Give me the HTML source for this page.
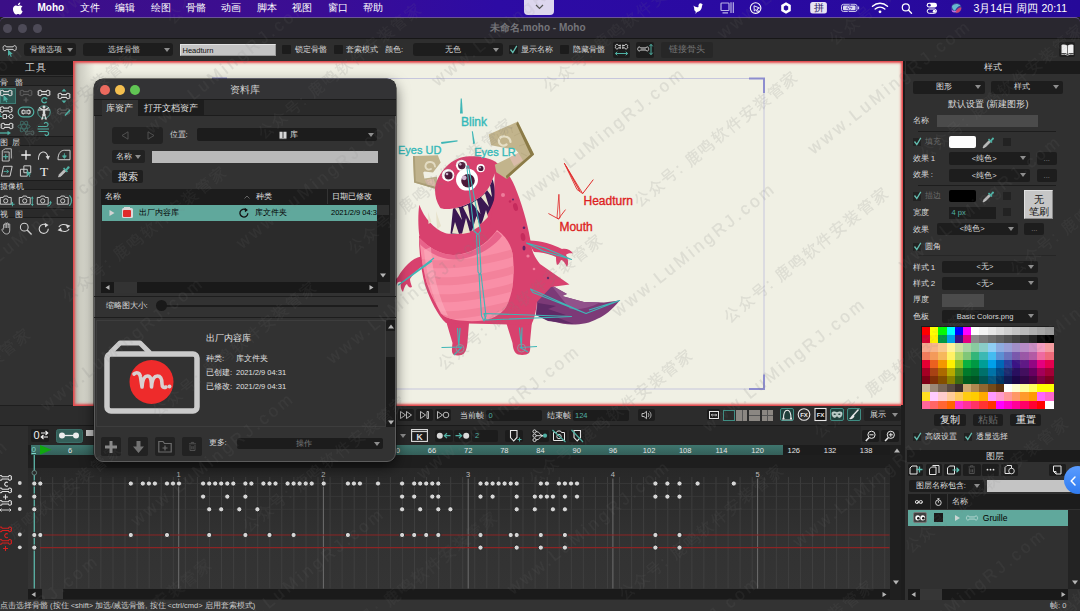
<!DOCTYPE html>
<html lang="zh">
<head>
<meta charset="utf-8">
<title>Moho</title>
<style>
*{box-sizing:border-box;margin:0;padding:0}
html,body{width:1080px;height:611px;overflow:hidden;background:#1e1e1e}
body{font-family:"Liberation Sans",sans-serif;font-size:8px;color:#d8d8d8;position:relative;line-height:1}
.a{position:absolute}
.t{position:absolute;white-space:nowrap;line-height:1}
svg{position:absolute;overflow:visible}
/* menubar */
#menubar{left:0;top:0;width:1080px;height:17px;background:linear-gradient(90deg,#3b0f87 0%,#3c0e90 22%,#3a0d95 30%,#2d0ba4 46%,#2a0aa2 65%,#260999 100%)}
#menubar .m{position:absolute;top:2.7px;font-size:10px;color:#fff;white-space:nowrap}
#titlebar{left:0;top:17px;width:1080px;height:21px;background:#29272f;border-top:1px solid #6b5596;border-radius:5px 5px 0 0}
#toolbar{left:0;top:38px;width:1080px;height:23px;background:#2e2e2e;border-top:1px solid #171717}
.dd{position:absolute;background:#1d1d1d;border-radius:3px;height:13.7px}
.dd .t{top:3px;font-size:7.5px;color:#d0d0d0}
.arr{position:absolute;width:0;height:0;border-left:3px solid transparent;border-right:3px solid transparent;border-top:4.5px solid #8e8e8e}
.cb{position:absolute;width:8.700px;height:8.700px;background:#222;margin:-.4px 0 0 -.4px}
/* panels */
.phead{position:absolute;background:#1b1b1b;color:#d6d6d6;font-size:9px;text-align:center}
.sech{left:0;width:73px;height:10px;background:#2a2a2a;border-bottom:1px solid #1c1c1c;border-top:1px solid #1c1c1c;font-size:8px;color:#d8d8d8}
.btn2{top:358px;width:20px;height:19px;background:#222;border-radius:2px}
.cb9{position:absolute;width:9px;height:9px;background:#1c1c1c;border-radius:1px}
</style>
</head>
<body>

<!-- ================= MENU BAR ================= -->
<div id="menubar" class="a">
  <svg style="left:12px;top:2px" width="11" height="13" viewBox="0 0 22 26"><path fill="#fff" d="M18.3 13.8c0-3 2.5-4.500 2.600-4.600-1.400-2.100-3.600-2.400-4.400-2.400-1.900-.2-3.700 1.100-4.600 1.100-1 0-2.400-1.100-4-1-2 0-3.900 1.200-5 3-2.100 3.700-.5 9.100 1.500 12.100 1 1.500 2.200 3.100 3.800 3 1.500-.1 2.100-1 3.900-1s2.300 1 3.900.9c1.600 0 2.700-1.500 3.700-2.900 1.100-1.700 1.600-3.300 1.600-3.400-.1 0-3-1.200-3-4.800zM15.300 4.900c.8-1 1.400-2.400 1.200-3.800-1.200.1-2.600.8-3.500 1.800-.8.900-1.400 2.300-1.300 3.700 1.400.1 2.800-.7 3.600-1.700z"/></svg>
  <span class="m" style="left:37.500px;font-weight:bold">Moho</span>
  <span class="m" style="left:79.500px">文件</span>
  <span class="m" style="left:115px">编辑</span>
  <span class="m" style="left:150.500px">绘图</span>
  <span class="m" style="left:186px">骨骼</span>
  <span class="m" style="left:221px">动画</span>
  <span class="m" style="left:256.500px">脚本</span>
  <span class="m" style="left:292px">视图</span>
  <span class="m" style="left:327.500px">窗口</span>
  <span class="m" style="left:363px">帮助</span>
  <div class="a" style="left:524px;top:0;width:30px;height:15px;background:#ddd6ee;border-radius:0 0 4px 4px"></div>
  <svg style="left:535px;top:4px" width="9" height="6" viewBox="0 0 9 6"><path d="M1 1 L4.500 4.500 L8 1" fill="none" stroke="#555" stroke-width="1.200"/></svg>
  <svg style="left:0;top:0" width="1080" height="17" viewBox="0 0 1080 17">
    <path d="M693.500 5.500 C695 7 697 7.500 698.500 7 C698 5 699 3.200 700.500 3.200 C701.300 3.200 701.800 3.600 702 4.300 L703 4.800 L702 5.500 C702 9 700 11.500 697 12 L695.500 14 L695.800 11.800 C694.500 11 694 9.500 694.200 8 C694 7.200 693.600 6.300 693.500 5.500 Z" fill="#fff"/>
    <g fill="none" stroke="#b9b2e6" stroke-width="1.200"><rect x="721" y="3" width="8" height="7.500" rx=".8"/><path d="M722.500 12.800 H728 M731 2.300 V13 M733.300 2.300 V13"/></g>
    <circle cx="755.600" cy="8.100" r="5.300" fill="none" stroke="#fff" stroke-width="1.100"/><path d="M754 5.800 L759.500 8 L757.200 8.900 L758.500 11.500 L757.300 12 L756.100 9.500 L754.300 11 Z" fill="none" stroke="#fff" stroke-width=".9"/>
    <path d="M786 2.200 L790.800 5 V11 L786 13.800 L781.200 11 V5 Z M786 5.200 L783.800 6.500 V9.500 L786 10.800 L788.200 9.500 V6.500 Z" fill="#fff" fill-rule="evenodd"/>
    <rect x="810.200" y="2" width="16.700" height="11.400" rx="2.500" fill="#e7e3f3"/>
    <g fill="none" stroke="#fff" stroke-width="1"><rect x="841.500" y="4.300" width="15.500" height="7.200" rx="2" stroke="#c9c3ea"/><path d="M858.500 6.500 V9.300" stroke="#c9c3ea" stroke-width="1.300"/></g>
    <rect x="843" y="5.600" width="12.500" height="4.600" rx="1" fill="#d9d5f0"/>
    <path d="M850.500 3.800 L846.500 8.300 H849 L848 12 L852 7.500 H849.500 Z" fill="#fff" stroke="#2a0aa2" stroke-width=".6"/>
    <g fill="none" stroke="#fff" stroke-width="1.500" stroke-linecap="round"><path d="M872.500 6.200 C877 2.400 883 2.400 887.500 6.200"/><path d="M875.200 9 C878 6.700 882 6.700 884.800 9"/></g><circle cx="880" cy="11.800" r="1.400" fill="#fff"/>
    <circle cx="905.800" cy="7.400" r="3.500" fill="none" stroke="#fff" stroke-width="1.200"/><path d="M908.400 10 L911.500 13.200" stroke="#fff" stroke-width="1.400" stroke-linecap="round"/>
    <rect x="926.700" y="2.800" width="10.300" height="4.800" rx="2.400" fill="#fff"/><circle cx="929.300" cy="5.200" r="1.400" fill="#2a0aa2"/>
    <rect x="927.200" y="9" width="9.300" height="4.300" rx="2.150" fill="none" stroke="#fff" stroke-width="1"/><circle cx="934.300" cy="11.150" r="1.500" fill="#fff"/>
    <circle cx="956.300" cy="8" r="5.200" fill="#3a3f9c"/><path d="M952 6 C954 3.500 958 3.300 960.500 5.500 C958 6.500 956 8 955 11 C953 10 952 8 952 6 Z" fill="#6fd0d8" opacity=".85"/><path d="M955.500 12.800 C956 9.500 958.500 7.500 961.300 7.500 C961.500 10.500 959 13 955.500 12.800 Z" fill="#e0406a" opacity=".9"/><path d="M951.500 9.500 C953 11 955 11.500 957 10.500 C956 12.500 953.500 13 952 11.500 Z" fill="#c070e0"/>
  </svg>
  <span class="m" style="left:813.500px;top:2.700px;color:#2b1a66">拼</span>
  <span class="m" style="left:973.500px;font-size:10.500px;top:2.500px">3月14日 周四</span>
  <span class="m" style="left:1041.500px;font-size:10.500px;top:2.500px">20:11</span>
</div>

<!-- ================= TITLE BAR ================= -->
<div id="titlebar" class="a">
  <div class="a" style="left:2.700px;top:5.600px;width:9px;height:9px;border-radius:5px;background:#4d4a57"></div>
  <div class="a" style="left:17.700px;top:5.600px;width:9px;height:9px;border-radius:5px;background:#4d4a57"></div>
  <div class="a" style="left:32.900px;top:5.600px;width:9px;height:9px;border-radius:5px;background:#4d4a57"></div>
  <span class="t" style="left:490px;top:5px;font-size:10px;font-weight:bold;color:#75757a">未命名.moho - Moho</span>
</div>

<!-- ================= TOOLBAR ================= -->
<div id="toolbar" class="a">
  <svg style="left:2px;top:3.500px" width="16" height="15" viewBox="0 0 16 15"><path transform="translate(.5 1.500) scale(.9)" d="M4.2 2.6 C3.9 1.2 2.2 .8 1.5 1.8 C.4 2.2 .4 3.600 1.2 4 C.4 4.400 .4 5.800 1.5 6.200 C2.2 7.200 3.900 6.800 4.200 5.400 L11.800 5.400 C12.100 6.800 13.800 7.200 14.500 6.200 C15.600 5.800 15.600 4.400 14.800 4 C15.600 3.600 15.600 2.200 14.500 1.800 C13.800 .8 12.100 1.200 11.800 2.600 Z" fill="none" stroke="#d6d6d6" stroke-width="1.100"/><path d="M6 6.500 L6 13 L7.700 11.500 L8.800 14 L9.800 13.500 L8.700 11.200 L10.800 11 Z" fill="#4fb0a3"/></svg>
  <div class="dd" style="left:23.800px;top:3.500px;width:52.500px"><span class="t" style="left:6px;top:3.200px">骨骼选项</span><i class="arr" style="left:43.500px;top:5px"></i></div>
  <div class="dd" style="left:83px;top:3.500px;width:90px"><span class="t" style="left:25.300px;top:3.200px">选择骨骼</span><i class="arr" style="left:80.500px;top:5px"></i></div>
  <div class="a" style="left:179.500px;top:5px;width:96px;height:12px;background:#c4c4c4;border:1px solid #e2e2e2;border-right-color:#9a9a9a;border-bottom-color:#9a9a9a"><span class="t" style="left:2px;top:1.700px;font-size:7.500px;color:#111">Headturn</span></div>
  <i class="cb9" style="left:282px;top:6px"></i><span class="t" style="left:294.500px;top:7px;font-size:7.500px">锁定骨骼</span>
  <i class="cb9" style="left:333.800px;top:6px"></i><span class="t" style="left:345.800px;top:7px;font-size:7.500px">套索模式</span>
  <span class="t" style="left:385px;top:7px;font-size:7.500px">颜色:</span>
  <div class="dd" style="left:412.500px;top:3.500px;width:90px"><span class="t" style="left:32.500px;top:3.200px">无色</span><i class="arr" style="left:80.500px;top:5px"></i></div>
  <i class="cb9" style="left:508.800px;top:6px"></i><svg style="left:509px;top:5.500px" width="9" height="9" viewBox="0 0 9 9"><path d="M1.500 4.500 L3.800 7.500 L7.800 .8" fill="none" stroke="#63bdb0" stroke-width="1.300"/></svg><span class="t" style="left:521.300px;top:7px;font-size:7.500px">显示名称</span>
  <i class="cb9" style="left:560px;top:6px"></i><span class="t" style="left:572.500px;top:7px;font-size:7.500px">隐藏骨骼</span>
  <div class="a" style="left:612.500px;top:2.500px;width:17px;height:16px;background:#1d1d1d;border-radius:2px"></div>
  <svg style="left:613.500px;top:4px" width="15" height="13" viewBox="0 0 15 13"><path transform="translate(.8 .3) scale(.84)" d="M4.2 2.6 C3.9 1.2 2.2 .8 1.5 1.8 C.4 2.2 .4 3.600 1.2 4 C.4 4.400 .4 5.800 1.5 6.200 C2.2 7.200 3.900 6.800 4.200 5.400 L11.800 5.400 C12.100 6.800 13.800 7.200 14.500 6.200 C15.600 5.800 15.600 4.400 14.800 4 C15.600 3.600 15.600 2.200 14.500 1.800 C13.800 .8 12.100 1.200 11.800 2.600 Z" fill="none" stroke="#e0e0e0" stroke-width="1.100"/><path d="M7.500 .5 V7" stroke="#1d1d1d" stroke-width="1.600"/><path d="M6.200 1.500 V6 M8.800 1.500 V6" stroke="#e0e0e0" stroke-width=".7"/><path d="M1.500 10.500 H13.500 M3.300 8.800 L1.300 10.500 L3.300 12.200 M11.700 8.800 L13.700 10.500 L11.700 12.200" fill="none" stroke="#4fb0a3" stroke-width="1"/></svg>
  <div class="a" style="left:636.300px;top:2.500px;width:17.500px;height:16px;background:#1d1d1d;border-radius:2px"></div>
  <svg style="left:637px;top:4px" width="16" height="13" viewBox="0 0 16 13"><path transform="translate(.3 3) scale(.74)" d="M4.2 2.6 C3.9 1.2 2.2 .8 1.5 1.8 C.4 2.2 .4 3.600 1.2 4 C.4 4.400 .4 5.800 1.5 6.200 C2.2 7.200 3.900 6.800 4.200 5.400 L11.800 5.400 C12.100 6.800 13.800 7.200 14.500 6.200 C15.600 5.800 15.600 4.400 14.800 4 C15.600 3.600 15.600 2.200 14.500 1.800 C13.800 .8 12.100 1.200 11.800 2.600 Z" fill="none" stroke="#e0e0e0" stroke-width="1.200"/><path d="M4 5.300 H8.500 M4 6.800 H8.500" stroke="#9a9a9a" stroke-width=".5"/><path d="M14 1.500 V11.500 M12.300 3.300 L14 1.300 L15.700 3.300 M12.300 9.700 L14 11.700 L15.700 9.700" fill="none" stroke="#4fb0a3" stroke-width="1"/></svg>
  <div class="a" style="left:660.500px;top:2.500px;width:52.500px;height:16px;background:#272727;border-radius:2px"><span class="t" style="left:8.300px;top:3.500px;font-size:8.800px;color:#737373">链接骨头</span></div>
  <div class="a" style="left:1058.800px;top:3.300px;width:16.200px;height:15px;background:#1f1f1f;border-radius:2px"></div>
  <svg style="left:1060.500px;top:5px" width="13" height="12" viewBox="0 0 13 12"><path d="M.5 1 C2.500 .2 4.500 .4 6.200 1.500 V10 C4.500 9 2.500 8.800 .5 9.500 Z M12.500 1 C10.500 .2 8.500 .4 6.800 1.500 V10 C8.500 9 10.500 8.800 12.500 9.500 Z" fill="#efefef"/><path d="M.5 10.500 C2.500 10 4.500 10.200 6.500 11.200 C8.500 10.200 10.500 10 12.500 10.500" fill="none" stroke="#efefef" stroke-width=".8"/></svg>
</div>

<!-- ================= LEFT TOOLS PANEL ================= -->
<div class="a" id="left" style="left:0;top:61px;width:73px;height:344px;background:#313131">
  <div class="phead" style="left:0;top:0;width:73px;height:14px"><span class="t" style="left:25px;top:2px;font-size:10px;letter-spacing:1px">工具</span></div>
  <div class="a sech" style="top:15px"><span class="t" style="left:0;top:1.500px">骨&nbsp;&nbsp;&nbsp;骼</span></div>
  <div class="a sech" style="top:75px"><span class="t" style="left:0;top:1.500px">图&nbsp;&nbsp;层</span></div>
  <div class="a sech" style="top:119px"><span class="t" style="left:0;top:1.500px">摄像机</span></div>
  <div class="a sech" style="top:147px"><span class="t" style="left:0;top:1.500px">视&nbsp;&nbsp;&nbsp;图</span></div>
  <div class="a" style="left:0;top:26.500px;width:16px;height:16px;background:#2c5752;border:1px solid #3f7c75"></div>
</div>
<div class="a" id="lefticons" style="left:0;top:0;width:73px;height:405px;overflow:hidden">
<svg style="left:-1.8px;top:87.8px" width="18" height="16" viewBox="0 0 18 16"><path transform="translate(1.5 1) scale(1)" d="M4.2 2.6 C3.9 1.2 2.2 .8 1.5 1.8 C.4 2.2 .4 3.6 1.2 4 C.4 4.4 .4 5.8 1.5 6.2 C2.2 7.2 3.9 6.8 4.2 5.4 L9.0 5.4 C9.3 6.8 11.0 7.2 11.7 6.2 C12.8 5.8 12.8 4.4 12.0 4 C12.8 3.6 12.8 2.2 11.7 1.8 C11.0 .8 9.3 1.2 9.0 2.6 Z" fill="none" stroke="#d6d6d6" stroke-width="1.10"/><path d="M5.500 7 L5.500 13.500 L7.200 12 L8.300 14.500 L9.300 14 L8.200 11.700 L10.300 11.500 Z" fill="#4fb0a3"/></svg>
<svg style="left:16.5px;top:87.8px" width="18" height="16" viewBox="0 0 18 16"><path transform="translate(2.4 1) scale(1)" d="M4.2 2.6 C3.9 1.2 2.2 .8 1.5 1.8 C.4 2.2 .4 3.6 1.2 4 C.4 4.4 .4 5.8 1.5 6.2 C2.2 7.2 3.9 6.8 4.2 5.4 L9.0 5.4 C9.3 6.8 11.0 7.2 11.7 6.2 C12.8 5.8 12.8 4.4 12.0 4 C12.8 3.6 12.8 2.2 11.7 1.8 C11.0 .8 9.3 1.2 9.0 2.6 Z" fill="none" stroke="#5a5a5a" stroke-width="1.10"/><path d="M9 9.500 V14.500 M6.500 12 H11.500" stroke="#5a5a5a" stroke-width="1.2"/></svg>
<svg style="left:35.1px;top:87.8px" width="18" height="16" viewBox="0 0 18 16"><path transform="translate(2.4 1) scale(1)" d="M4.2 2.6 C3.9 1.2 2.2 .8 1.5 1.8 C.4 2.2 .4 3.6 1.2 4 C.4 4.4 .4 5.8 1.5 6.2 C2.2 7.2 3.9 6.8 4.2 5.4 L9.0 5.4 C9.3 6.8 11.0 7.2 11.7 6.2 C12.8 5.8 12.8 4.4 12.0 4 C12.8 3.6 12.8 2.2 11.7 1.8 C11.0 .8 9.3 1.2 9.0 2.6 Z" fill="none" stroke="#d6d6d6" stroke-width="1.10"/><path d="M11.500 10.800 A2.600 2.600 0 1 0 11.600 13.600" fill="none" stroke="#4fb0a3" stroke-width="1.300"/><path d="M10 9.200 L12.800 10 L11.200 12 Z" fill="#4fb0a3"/></svg>
<svg style="left:54.5px;top:87.8px" width="18" height="16" viewBox="0 0 18 16"><path transform="translate(2.4 4) scale(1)" d="M4.2 2.6 C3.9 1.2 2.2 .8 1.5 1.8 C.4 2.2 .4 3.6 1.2 4 C.4 4.4 .4 5.8 1.5 6.2 C2.2 7.2 3.9 6.8 4.2 5.4 L9.0 5.4 C9.3 6.8 11.0 7.2 11.7 6.2 C12.8 5.8 12.8 4.4 12.0 4 C12.8 3.6 12.8 2.2 11.7 1.8 C11.0 .8 9.3 1.2 9.0 2.6 Z" fill="none" stroke="#d6d6d6" stroke-width="1.10"/><path d="M6.500 3.500 L9 .8 L11.500 3.500 Z M6.500 12.500 L9 15.200 L11.500 12.500 Z" fill="#4fb0a3"/></svg>
<svg style="left:-1.8px;top:103.7px" width="18" height="16" viewBox="0 0 18 16"><path transform="translate(1.5 1.5) scale(1)" d="M4.2 2.6 C3.9 1.2 2.2 .8 1.5 1.8 C.4 2.2 .4 3.6 1.2 4 C.4 4.4 .4 5.8 1.5 6.2 C2.2 7.2 3.9 6.8 4.2 5.4 L9.0 5.4 C9.3 6.8 11.0 7.2 11.7 6.2 C12.8 5.8 12.8 4.4 12.0 4 C12.8 3.6 12.8 2.2 11.7 1.8 C11.0 .8 9.3 1.2 9.0 2.6 Z" fill="none" stroke="#d6d6d6" stroke-width="1.10"/><path d="M2 9 V12.500 H4" fill="none" stroke="#4fb0a3" stroke-width="1"/><path d="M5 10.500 H8.500 V14.500 H5 Z M9.500 12.500 H11" fill="none" stroke="#d6d6d6" stroke-width="1"/><circle cx="13" cy="12.500" r="2" fill="none" stroke="#d6d6d6" stroke-width="1"/></svg>
<svg style="left:16.5px;top:103.7px" width="18" height="16" viewBox="0 0 18 16"><rect x="1.200" y="3.200" width="15.600" height="9.600" rx="4.800" fill="none" stroke="#4fb0a3" stroke-width="1.200"/><path transform="translate(4.4 5.2) scale(0.7)" d="M4.2 2.6 C3.9 1.2 2.2 .8 1.5 1.8 C.4 2.2 .4 3.6 1.2 4 C.4 4.4 .4 5.8 1.5 6.2 C2.2 7.2 3.9 6.8 4.2 5.4 L9.0 5.4 C9.3 6.8 11.0 7.2 11.7 6.2 C12.8 5.8 12.8 4.4 12.0 4 C12.8 3.6 12.8 2.2 11.7 1.8 C11.0 .8 9.3 1.2 9.0 2.6 Z" fill="none" stroke="#d6d6d6" stroke-width="1.57"/></svg>
<svg style="left:35.1px;top:103.7px" width="18" height="16" viewBox="0 0 18 16"><circle cx="9" cy="8" r="6.300" fill="none" stroke="#4fb0a3" stroke-width=".8"/><path d="M9 4.500 V10 M3 6 H15 M4 3.500 L9 6.500 L14 3.500 M9 10 L6.500 15.500 M9 10 L11.500 15.500 M8 10 L7.500 15.500 M10 10 L10.500 15.500" stroke="#d6d6d6" stroke-width="1.100" fill="none"/><circle cx="9" cy="3" r="1.500" fill="#d6d6d6"/><path d="M7.800 5.500 H10.200 V10.500 H7.800 Z" fill="#d6d6d6"/></svg>
<svg style="left:54.5px;top:103.7px" width="18" height="16" viewBox="0 0 18 16"><path transform="translate(2 3.5) scale(1)" d="M4.2 2.6 C3.9 1.2 2.2 .8 1.5 1.8 C.4 2.2 .4 3.6 1.2 4 C.4 4.4 .4 5.8 1.5 6.2 C2.2 7.2 3.9 6.8 4.2 5.4 L9.0 5.4 C9.3 6.8 11.0 7.2 11.7 6.2 C12.8 5.8 12.8 4.4 12.0 4 C12.8 3.6 12.8 2.2 11.7 1.8 C11.0 .8 9.3 1.2 9.0 2.6 Z" fill="none" stroke="#5a5a5a" stroke-width="1.10"/><path d="M10 11.500 L15 6" stroke="#4fb0a3" stroke-width="1.500"/></svg>
<svg style="left:-1.8px;top:120.0px" width="18" height="16" viewBox="0 0 18 16"><path transform="translate(2.4 2) scale(1)" d="M4.2 2.6 C3.9 1.2 2.2 .8 1.5 1.8 C.4 2.2 .4 3.6 1.2 4 C.4 4.4 .4 5.8 1.5 6.2 C2.2 7.2 3.9 6.8 4.2 5.4 L9.0 5.4 C9.3 6.8 11.0 7.2 11.7 6.2 C12.8 5.8 12.8 4.4 12.0 4 C12.8 3.6 12.8 2.2 11.7 1.8 C11.0 .8 9.3 1.2 9.0 2.6 Z" fill="none" stroke="#d6d6d6" stroke-width="1.10"/><path d="M0 13 H10.500" stroke="#4fb0a3" stroke-width="1.300"/><path d="M9.500 10.700 L13 13 L9.500 15.300 Z" fill="#4fb0a3"/></svg>
<svg style="left:16.5px;top:120.0px" width="18" height="16" viewBox="0 0 18 16"><g fill="none" stroke="#3f6f69" stroke-width=".9"><ellipse cx="7" cy="6.500" rx="6" ry="2.300"/><ellipse cx="7" cy="6.500" rx="6" ry="2.300" transform="rotate(60 7 6.500)"/><ellipse cx="7" cy="6.500" rx="6" ry="2.300" transform="rotate(-60 7 6.500)"/></g><path transform="translate(8 10) scale(0.7)" d="M4.2 2.6 C3.9 1.2 2.2 .8 1.5 1.8 C.4 2.2 .4 3.6 1.2 4 C.4 4.4 .4 5.8 1.5 6.2 C2.2 7.2 3.9 6.8 4.2 5.4 L9.0 5.4 C9.3 6.8 11.0 7.2 11.7 6.2 C12.8 5.8 12.8 4.4 12.0 4 C12.8 3.6 12.8 2.2 11.7 1.8 C11.0 .8 9.3 1.2 9.0 2.6 Z" fill="none" stroke="#4a5a58" stroke-width="1.57"/></svg>
<svg style="left:35.1px;top:120.0px" width="18" height="16" viewBox="0 0 18 16"><path d="M3 6.500 H11 A2 2 0 1 0 9.200 3.800 M2.500 9 H14 M3.500 11.500 H11.500 A2 2 0 1 1 9.800 14.300" fill="none" stroke="#4fb0a3" stroke-width="1.200"/></svg>
<svg style="left:-1.8px;top:147.4px" width="18" height="16" viewBox="0 0 18 16"><g transform="translate(1.26 1.12) scale(0.86)"><path d="M3.500 3 L7 .8 H14 V12 M3.500 3 V15 H11.500 V4.500 H5" fill="none" stroke="#d6d6d6" stroke-width="1"/><path d="M7.500 7 V13 M4.500 10 H10.500" stroke="#4fb0a3" stroke-width="1.400"/></g></svg>
<svg style="left:16.5px;top:147.4px" width="18" height="16" viewBox="0 0 18 16"><g transform="translate(1.26 1.12) scale(0.86)"><path d="M9 2.500 V13.500 M3.500 8 H14.500" stroke="#f2f2f2" stroke-width="1.500"/></g></svg>
<svg style="left:35.1px;top:147.4px" width="18" height="16" viewBox="0 0 18 16"><g transform="translate(1.26 1.12) scale(0.86)"><path d="M2.500 13.500 C2.500 3 12 1.500 13.500 10" fill="none" stroke="#d6d6d6" stroke-width="1.200"/><path d="M10.800 9.500 L16 9 L13.800 13.800 Z" fill="#d6d6d6"/></g></svg>
<svg style="left:54.5px;top:147.4px" width="18" height="16" viewBox="0 0 18 16"><g transform="translate(1.26 1.12) scale(0.86)"><path d="M2 13.500 C2 5 6 2.500 9.500 2.500 H16 V13.500 Z" fill="none" stroke="#d6d6d6" stroke-width="1.100"/><path d="M9.500 6 V10 M7.300 9 L9.500 12 L11.700 9 Z" stroke="#4fb0a3" fill="#4fb0a3" stroke-width="1"/></g></svg>
<svg style="left:-1.8px;top:163.0px" width="18" height="16" viewBox="0 0 18 16"><g transform="translate(1.26 1.12) scale(0.86)"><path d="M5 2.500 H15 L12.500 14 H2.500 Z" fill="none" stroke="#d6d6d6" stroke-width="1.100"/><path d="M5 8.500 H10.500 M8.500 6.500 L11 8.500 L8.500 10.500" fill="none" stroke="#4fb0a3" stroke-width="1"/></g></svg>
<svg style="left:16.5px;top:163.0px" width="18" height="16" viewBox="0 0 18 16"><g transform="translate(1.26 1.12) scale(0.86)"><path d="M6.500 2 H14.500 V10 H6.500 Z M2.500 6 H10.500 V14 H2.500 Z" fill="none" stroke="#d6d6d6" stroke-width="1.100"/><path d="M10 7 L10 14 L11.800 12.500 L13 15 L14 14.500 L12.800 12 L15 11.800 Z" fill="#4fb0a3"/></g></svg>
<svg style="left:35.1px;top:163.0px" width="18" height="16" viewBox="0 0 18 16"><g transform="translate(1.26 1.12) scale(0.86)"><text x="9" y="14" text-anchor="middle" font-family="Liberation Serif,serif" font-size="15.500" fill="#f2f2f2">T</text></g></svg>
<svg style="left:54.5px;top:163.0px" width="18" height="16" viewBox="0 0 18 16"><g transform="translate(1.26 1.12) scale(0.86)"><path d="M2.500 15 L3.500 12 L9.500 6 L11.500 8 L5.500 14 Z" fill="#bdbdbd" stroke="#d6d6d6" stroke-width=".6"/><path d="M8.500 4.500 L13 9" stroke="#4fb0a3" stroke-width="1.800"/><path d="M10.500 6.500 L13.500 2.500 A1.600 1.600 0 0 1 15.500 4.500 L12 7.800 Z" fill="#4fb0a3"/></g></svg>
<svg style="left:-1.8px;top:192.0px" width="18" height="16" viewBox="0 0 18 16"><g transform="translate(1.44 1.28) scale(0.84)"><path d="M1 5 H4.500 L5.500 3.300 H9.500 L10.500 5 H14 V13 H1 Z" fill="none" stroke="#d6d6d6" stroke-width="1.100"/><circle cx="7.500" cy="9" r="2.500" fill="none" stroke="#d6d6d6" stroke-width="1.100"/><path d="M15.500 10.500 V15.500 M13 13 H18" stroke="#4fb0a3" stroke-width="1.200"/></g></svg>
<svg style="left:16.5px;top:192.0px" width="18" height="16" viewBox="0 0 18 16"><g transform="translate(1.44 1.28) scale(0.84)"><path d="M1 5 H4.500 L5.500 3.300 H9.500 L10.500 5 H14 V13 H1 Z" fill="none" stroke="#d6d6d6" stroke-width="1.100"/><circle cx="7.500" cy="9" r="2.500" fill="none" stroke="#d6d6d6" stroke-width="1.100"/><path d="M16.500 5 V14" stroke="#4fb0a3" stroke-width="1.100"/><path d="M14.800 6.300 L16.500 3.500 L18.200 6.300 Z M14.800 12.700 L16.500 15.500 L18.200 12.700 Z" fill="#4fb0a3"/></g></svg>
<svg style="left:35.1px;top:192.0px" width="18" height="16" viewBox="0 0 18 16"><g transform="translate(1.44 1.28) scale(0.84)"><path d="M1 5 H4.500 L5.500 3.300 H9.500 L10.500 5 H14 V13 H1 Z" fill="none" stroke="#d6d6d6" stroke-width="1.100"/><circle cx="7.500" cy="9" r="2.500" fill="none" stroke="#d6d6d6" stroke-width="1.100"/><path d="M13 15.200 C16 15.200 17 13.500 16.800 11" fill="none" stroke="#4fb0a3" stroke-width="1.100"/><path d="M15 11.800 L16.800 9 L18.500 11.800 Z" fill="#4fb0a3"/></g></svg>
<svg style="left:54.5px;top:192.0px" width="18" height="16" viewBox="0 0 18 16"><g transform="translate(1.44 1.28) scale(0.84)"><path d="M1 5 H4.500 L5.500 3.300 H9.500 L10.500 5 H14 V13 H1 Z" fill="none" stroke="#d6d6d6" stroke-width="1.100"/><circle cx="7.500" cy="9" r="2.500" fill="none" stroke="#d6d6d6" stroke-width="1.100"/><path d="M15.500 2.500 C18.500 6 18.500 11 15.500 15" fill="none" stroke="#4fb0a3" stroke-width="1.300"/></g></svg>
<svg style="left:-1.8px;top:220.0px" width="18" height="16" viewBox="0 0 18 16"><g transform="translate(1.26 1.12) scale(0.86)"><path d="M5 9 V4.500 A.9 .9 0 0 1 6.800 4.500 V3 A.9 .9 0 0 1 8.600 3 V3 A.9 .9 0 0 1 10.400 3 V4 A.9 .9 0 0 1 12.200 4 V10.500 C12.200 14 10.500 15 8.500 15 C6 15 5 13.500 3.200 10.500 C2.500 9.300 4 8.500 5 10 M6.800 4.500 V8 M8.600 3 V8 M10.400 3.500 V8" fill="none" stroke="#d6d6d6" stroke-width=".9"/></g></svg>
<svg style="left:16.5px;top:220.0px" width="18" height="16" viewBox="0 0 18 16"><g transform="translate(1.26 1.12) scale(0.86)"><circle cx="7" cy="7" r="4.500" fill="none" stroke="#d6d6d6" stroke-width="1.200"/><path d="M10.300 10.300 L15.500 15.500" stroke="#d6d6d6" stroke-width="1.600"/></g></svg>
<svg style="left:35.1px;top:220.0px" width="18" height="16" viewBox="0 0 18 16"><g transform="translate(1.26 1.12) scale(0.86)"><path d="M14 9 A5.300 5.300 0 1 1 11.800 4.700" fill="none" stroke="#d6d6d6" stroke-width="1.300"/><path d="M9.800 2 L14.300 4.500 L10.300 7.500 Z" fill="#d6d6d6"/></g></svg>
<svg style="left:54.5px;top:220.0px" width="18" height="16" viewBox="0 0 18 16"><g transform="translate(1.26 1.12) scale(0.86)"><path d="M3 7 C4.500 3.500 10 3 13 5.500 M15 9 C13.500 12.500 8 13 5 10.500" fill="none" stroke="#d6d6d6" stroke-width="1.300"/><path d="M11.500 3.500 L16.500 5.500 L12.500 8.500 Z M6.500 12.500 L1.500 10.500 L5.500 7.500 Z" fill="#d6d6d6"/></g></svg>
</div>

<!-- ================= CANVAS ================= -->
<div class="a" style="left:73px;top:61px;width:833px;height:345px;background:#1a1a1a"></div>
<div class="a" id="canvas" style="left:73px;top:60.800px;width:830px;height:345.200px;background:#f0f0e4;overflow:hidden">
  <div class="a" style="left:0;top:0;width:22px;height:100%;background:linear-gradient(90deg,#a9a99f 0,#cfcfc4 35%,#f0f0e4 100%)"></div>
  <div class="a" style="left:0;top:0;right:0;bottom:0;box-shadow:inset 0 0 2.500px 2px #e34f52, inset 0 0 1px 1px #e34f52"></div>
</div>
<svg id="monster" style="left:0;top:0" width="1080" height="611" viewBox="0 0 1080 611">
  <defs>
    <clipPath id="bellyclip"><path d="M419.500 236 C421 262 426 285 432 296 C437 306 440 312 444 316 C452 321 470 322 484 320.500 C496 318 502 313 506 307 C512 296 515 280 513 257 C512 247 508 240 498 232 L460 226 Z"/></clipPath>
  </defs>
  <!-- frame -->
  <rect x="212.500" y="78.500" width="551.500" height="310.500" fill="none" stroke="#c6c6dd" stroke-width="1"/>
  <path d="M212 78.500 H227 M749 78.500 H764 V93 M764 374.500 V389 H749" fill="none" stroke="#8d8dcf" stroke-width="2"/>
  <!-- horns -->
  <path d="M437 189.300 L414.100 182.600 L413 155.900 L437.800 155.200 L440.700 162.600 L433 172.500 L424.500 171.500 L423.200 172.500 L424.400 178.400 L437 176.700 Z" fill="#bfb28c"/>
  <path d="M437 189.300 L414.100 182.600 L413 155.900 L414.800 156 L415.800 181.200 L437 187.300 Z" fill="#ab9e76"/>
  <path d="M425 180 L433.500 178.500 L435.500 186.500 L427 184.500 Z" fill="#d9bba8"/>
  <path d="M435 166.500 C434.500 161 426.500 160.500 425.500 165.500 C425 169 428.500 170.500 431 169" fill="none" stroke="#e3dcc3" stroke-width="1.900" stroke-linecap="round"/>
  <!-- tail -->
  <path d="M537 300 L551 285 L567 294 L562 296 L584 302 L604 302.500 L619.600 300.500 C612 310 604 316 598 318.500 C590 323 582 324.500 572 324.500 C560 324 548 321 536 315 Z" fill="#7c3a77"/>
  <path d="M551 285 L567 294 L562 296 L584 302 L600 302.500 C590 308 580 310 570 309 Z" fill="#91528b"/>
  <path d="M538 303 L556 306 L548 309 L566 315 L556 317 L574 324 L548 321 L536 315 Z" fill="#5f2a66"/>
  <!-- arms -->
  <path d="M421 256.500 C412 258 403 268 398 277 C395 279 393.500 284 396 286 C397 282 399 281 401 282 C400 286 401 290 403 292 C404 288 405 285 407 284 C408 287 410 288 412 287 C411 284 410 281 410 279 C414 273 419 268 423 266 Z" fill="#d8416e"/>
  <path d="M527 240.500 C540 240 552 244 562 249 C566 248 571 250 573 253.500 C570 253 567 253.500 566 255 C568 258 569 263 567 267 C565 263 563 260 561 260 C560 262 559 264.500 557 265 C556 262 556 259 556 257 C549 254 541 252 534 252 Z" fill="#d8416e"/>
  <!-- legs -->
  <path d="M446 321 L452.500 343 C452 348 451 353 454 355 C458 356 462 355.500 464 353.500 C467 350 467 345 467.500 342 L469 323 Z" fill="#d8416e"/>
  <path d="M506 322 L512.500 343 C513 348 514 353 518 354.500 C522 355.500 527 355 529 353 C531 349 530 345 530 342 L532 321 Z" fill="#d8416e"/>
  <!-- body -->
  <path d="M495 161.500 C505 168 512 178 517 192 C524 210 529 230 531 244 C532 252 535 258 540 264 L569.500 284.500 L551 287 L537 302 C536 312 534 320 531 325 L446 323 C438 316 430 300 425 285 C421 270 419 252 419 236 L445 238 L480 230 L494 198 Z" fill="#d8416e"/>
  <!-- lower jaw -->
  <path d="M419.300 204.800 C418 214 418 226 419.500 237 C428 247 440 255 453 255 C466 255 480 245 489 231 L494 200 C490 212 484 222 475 229 C466 233.500 452 235 445 233 C434 229 424 218 419.300 204.800 Z" fill="#d8416e"/>
  <!-- belly -->
  <path d="M419.500 238 C421 262 426 285 432 296 C437 306 440 312 444 316 C452 321 470 322 484 320.500 C496 318 502 313 506 307 C512 296 515 280 513 257 C512 247 508 238 497 230 C490 240 474 254.500 453 255 C440 254.500 428 247 419.500 238 Z" fill="#f98fa7"/>
  <g clip-path="url(#bellyclip)" fill="#f3829b">
    <path d="M415 258 C445 264 485 258 520 247 V255 C485 266 445 272 415 266 Z"/>
    <path d="M415 275 C445 281 485 275 520 264 V272 C485 283 445 289 415 283 Z"/>
    <path d="M415 292 C445 298 485 292 520 281 V289 C485 300 445 306 415 300 Z"/>
    <path d="M415 309 C445 315 485 309 520 298 V306 C485 317 445 323 415 317 Z"/>
    <path d="M419.500 238 C428 247 440 254.500 453 255 C470 255.500 490 243 497 230 L502 236 C492 250 470 260 453 259.500 C440 259 428 252 419.500 244 Z" fill="#e8638a"/>
  </g>
  <path d="M424 250 L431 247 C432 270 438 295 448 316 L441 314 C432 296 426 272 424 250 Z" fill="#fbb0c0" opacity=".55"/>
  <!-- mouth interior -->
  <path d="M453 208.500 C462 207 474 202 483 195 C488 190 491 184 492.600 179 C495 186 495 194 494 200 C490 212 484 222 475 229 C466 233.500 455 235 450.500 233.500 Z" fill="#3a1752"/>
  <!-- teeth -->
  <path d="M455 208.300 L459 208 L462 220 Z M463 207 L468 205 L470.500 222 Z M472 203 L477 200 L480.500 214 Z M481 197 L485 193.500 L489 207 Z M487 190 L490 185 L492 197 Z" fill="#e9e4cd"/>
  <path d="M452 233.500 L455 222 L459 234 Z M462 234 L466 218 L470 232.500 Z M472 231 L476.500 216 L480 226 Z M482 223 L486 210 L488 217 Z" fill="#e9e4cd"/>
  <path d="M428 212 L431.500 222 L428.500 224 Z M436 211 L441 226 L437 229.500 Z" fill="#e6e1ca"/>
  <!-- head dome (upper jaw) -->
  <path d="M435 189.500 C436 176 449 158 466.500 156.500 C478 155.500 488 157.500 495 161.500 C498 164 497 170 492.600 179 C491 184 488 190 483 195 C474 202 462 207 453 208.500 C446 209.500 441 209 440 207.500 C436.500 202 435 196 435 189.500 Z" fill="#d8416e"/>
  <!-- right horn -->
  <path d="M506.700 178.900 L534.100 154.400 L517.800 121.600 L488.600 134.400 L491.100 145.300 L506.700 148.200 L514.800 148.800 L518.500 153 L494.800 164.800 L496.300 172.200 Z" fill="#c2b48c"/>
  <path d="M506.700 178.900 L534.100 154.400 L517.800 121.600 L516.200 124 L530.400 154.400 L505.900 175.900 Z" fill="#8b7b47"/>
  <path d="M509.600 157.400 L518.500 153 L523 160.400 L514.100 166.300 Z" fill="#d9bba8"/>
  <path d="M510.500 142 C510 135.500 500.500 134.500 499 140 C498 144.500 503 147 506.500 144.500" fill="none" stroke="#e6dfc6" stroke-width="2.200" stroke-linecap="round"/>
  <path d="M497 134 L500 140 M504 130 L506 136 M511 127 L512.500 133 M520 133 L514 136 M525 144 L519 146 M527 156 L521 153" stroke="#b3a57c" stroke-width=".6"/>
  <!-- spots -->
  <circle cx="503" cy="195" r="2" fill="#ee7d9b"/>
  <ellipse cx="515.500" cy="207" rx="2.300" ry="4" fill="#c52a5c" transform="rotate(-15 515.500 207)"/>
  <ellipse cx="523" cy="237" rx="2.300" ry="4" fill="#c52a5c" transform="rotate(-10 523 237)"/>
  <circle cx="510" cy="201.500" r="1.200" fill="#c52a5c"/>
  <circle cx="513" cy="199.600" r="1" fill="#5e2468"/>
  <circle cx="524" cy="227.800" r="1.300" fill="#5e2468"/>
  <ellipse cx="524" cy="248" rx="1.500" ry="2.600" fill="#5e2468"/>
  <circle cx="528" cy="256" r="1.600" fill="#ee7d9b"/>
  <circle cx="534" cy="269" r="1.300" fill="#ee7d9b"/>
  <circle cx="548" cy="278" r="1.200" fill="#5e2468"/>
  <!-- eyes -->
  <circle cx="467" cy="179.600" r="11" fill="#fff"/><circle cx="468" cy="180.800" r="6.800" fill="#4a1838"/><circle cx="464.200" cy="177.800" r="2.400" fill="#cfb3cf"/>
  <circle cx="448.100" cy="175.200" r="6.200" fill="#fff"/><circle cx="448.600" cy="175.400" r="4" fill="#4a1838"/><circle cx="447" cy="174" r="1.300" fill="#cfb3cf"/>
  <circle cx="461.500" cy="165.300" r="5.600" fill="#fff"/><circle cx="461.800" cy="165.600" r="3.700" fill="#4a1838"/><circle cx="460.300" cy="164.300" r="1.200" fill="#cfb3cf"/>
  <circle cx="480.700" cy="168.200" r="4.100" fill="#fff"/><circle cx="480.900" cy="168.400" r="2.600" fill="#4a1838"/><circle cx="480" cy="167.500" r=".9" fill="#cfb3cf"/>
  <!-- skeleton -->
  <g fill="none" stroke="#3fb6b6" stroke-width="1.100" stroke-linejoin="round">
    <path d="M466.800 166 L474 231 L478 234.500 L480.500 231 L468.500 166 Z"/>
    <path d="M476.500 234.500 L478 272 L480 275 L481 272 L479 234.500"/>
    <path d="M479 274 L481.500 316 L484 321 L486 316 L481 274"/>
    <path d="M484 313.500 L571.500 316.500 L486 320 Z"/>
    <path d="M530.500 289 L586 313.500 L533 292.500 Z"/>
    <path d="M586 313.500 L619.600 300.500 L589 310"/>
    <path d="M434 258 L398.500 285 L432 261"/>
    <path d="M526.500 243 L545 248 L571.500 259.500 L543 251 Z"/>
    <path d="M457.500 328 L458.800 347.500 L460 328"/>
    <path d="M519.400 327.500 L521.400 347.500 L522 327.500"/>
    <path d="M441.500 347.500 L462 347 L454 355"/>
    <path d="M537 346.500 L520 347.500 L528 352"/>
  </g>
  <circle cx="460" cy="348.500" r="4" fill="none" stroke="#9a8f99" stroke-width="1"/><circle cx="521.500" cy="348" r="4" fill="none" stroke="#9a8f99" stroke-width="1"/>
  <!-- control bones -->
  <path d="M460.700 98.500 L461.800 98.500 L462.800 113.500 L460 113.500 Z" fill="#3fb6b6"/>
  <path d="M441 142 L457.500 140.200 L457.500 141.400 L441.500 144 Z" fill="#3fb6b6"/>
  <path d="M471.800 131.200 L472.800 131.200 L475 143.500 L473.200 144 Z" fill="#3fb6b6"/>
  <path d="M564.300 163.200 L582.700 193.600 L577 189.500 Z" fill="none" stroke="#e02a2a" stroke-width=".9"/>
  <path d="M566 166 L580 191.500 M568 170 L579.500 190.500" stroke="#e02a2a" stroke-width=".8"/>
  <path d="M582.700 193.600 L593.300 179.600" stroke="#e02a2a" stroke-width="1"/>
  <path d="M558.900 194.300 L560 218 L558.400 218.900 L557 218 Z" fill="none" stroke="#e02a2a" stroke-width=".8"/>
  <path d="M548.400 213.500 L558.400 218.900 L565.500 209.600" fill="none" stroke="#e02a2a" stroke-width=".9"/>
  <g font-family="Liberation Sans, sans-serif" stroke-width=".35">
    <text x="461" y="125.500" font-size="12" fill="#35b9b9" stroke="#35b9b9">Blink</text>
    <text x="398" y="154.200" font-size="11" fill="#35b9b9" stroke="#35b9b9">Eyes UD</text>
    <text x="474.200" y="155.500" font-size="11" fill="#35b9b9" stroke="#35b9b9">Eyes LR</text>
    <text x="583.500" y="204.800" font-size="12" fill="#dd1f1f" stroke="#dd1f1f">Headturn</text>
    <text x="559.400" y="230.600" font-size="12" fill="#dd1f1f" stroke="#dd1f1f">Mouth</text>
  </g>
</svg>
<!-- MONSTER -->
<!-- ================= RIGHT PANEL ================= -->
<div class="a" id="right" style="left:905px;top:61px;width:175px;height:539px;background:#303030">
  <div class="phead" style="left:1px;top:.3px;width:174px;height:12.700px"><span class="t" style="left:78px;top:2px;font-size:9px">样式</span></div>
</div>
<div class="a" id="rc" style="left:905px;top:61px;width:175px;height:550px;font-size:7.5px;color:#dcdcdc">
<div class="a" style="left:7.5px;top:19.8px;width:72px;height:12.900px;background:#1d1d1d;border-radius:2px"><span class="t" style="left:0;width:62px;text-align:center;top:2.5px;font-size:7.5px;color:#d8d8d8">图形</span><i class="arr" style="left:62px;top:4.2px"></i></div>
<div class="a" style="left:86px;top:19.8px;width:72px;height:12.900px;background:#1d1d1d;border-radius:2px"><span class="t" style="left:0;width:62px;text-align:center;top:2.5px;font-size:7.5px;color:#d8d8d8">样式</span><i class="arr" style="left:62px;top:4.2px"></i></div>
<span class="t" style="left:43px;width:80px;text-align:center;top:39.2px;font-size:9px;color:#dedede">默认设置 (新建图形)</span>
<span class="t" style="left:7.5px;top:56.0px;font-size:8px;color:#dcdcdc;">名称</span>
<div class="a" style="left:31.7px;top:53.7px;width:101px;height:12.5px;background:#4b4b4b"></div>
<div class="a" style="left:13px;top:69.5px;width:138px;height:1px;background:#1d1d1d"></div>
<i class="cb" style="left:8px;top:77px"></i><svg style="left:8px;top:76px" width="9" height="9" viewBox="0 0 9 9"><path d="M1.500 4.500 L3.800 7.500 L7.800 .8" fill="none" stroke="#63bdb0" stroke-width="1.300"/></svg>
<span class="t" style="left:20px;top:77.0px;font-size:8px;color:#6a6a6a;">填充</span>
<div class="a" style="left:44px;top:75px;width:27px;height:12px;background:#fdfdfd;border-radius:2px"></div>
<i class="cb" style="left:98px;top:77px"></i>
<svg style="left:77px;top:74.5px" width="13" height="13" viewBox="0 0 13 13"><path d="M1 12 L2 9.500 L7 4.500 L8.500 6 L3.500 11 Z" fill="#b9b9b9" stroke="#d8d8d8" stroke-width=".6"/><path d="M6.500 3 L10 6.500" stroke="#4fb3a6" stroke-width="1.600"/><path d="M8 4.800 L10.500 1.500 A1.300 1.300 0 0 1 12 3 L9 5.800 Z" fill="#4fb3a6"/></svg>
<span class="t" style="left:7.5px;top:93.5px;font-size:8px;color:#dcdcdc;">效果 1</span>
<div class="a" style="left:44px;top:91.30000000000001px;width:80.5px;height:13px;background:#1d1d1d;border-radius:2px"><span class="t" style="left:0;width:70.5px;text-align:center;top:3.2px;font-size:7.5px;color:#d8d8d8">&lt;纯色&gt;</span><i class="arr" style="left:70.5px;top:4.0px"></i></div>
<div class="a" style="left:132px;top:91.30000000000001px;width:19.5px;height:13px;background:#1d1d1d;border-radius:2px"><span class="t" style="left:0;width:19.5px;text-align:center;top:3.2px;font-size:7.5px;color:#888">...</span></div>
<span class="t" style="left:7.5px;top:110.0px;font-size:8px;color:#dcdcdc;">效果 :</span>
<div class="a" style="left:44px;top:107.80000000000001px;width:80.5px;height:13px;background:#1d1d1d;border-radius:2px"><span class="t" style="left:0;width:70.5px;text-align:center;top:3.2px;font-size:7.5px;color:#d8d8d8">&lt;纯色&gt;</span><i class="arr" style="left:70.5px;top:4.0px"></i></div>
<div class="a" style="left:132px;top:107.80000000000001px;width:19.5px;height:13px;background:#1d1d1d;border-radius:2px"><span class="t" style="left:0;width:19.5px;text-align:center;top:3.2px;font-size:7.5px;color:#888">...</span></div>
<div class="a" style="left:13px;top:124px;width:138px;height:1px;background:#1d1d1d"></div>
<i class="cb" style="left:8px;top:131.4px"></i><svg style="left:8px;top:130.4px" width="9" height="9" viewBox="0 0 9 9"><path d="M1.500 4.500 L3.800 7.500 L7.800 .8" fill="none" stroke="#63bdb0" stroke-width="1.300"/></svg>
<span class="t" style="left:20px;top:131.4px;font-size:8px;color:#6a6a6a;">描边</span>
<div class="a" style="left:44px;top:128.8px;width:27px;height:12px;background:#000;border-radius:2px"></div>
<svg style="left:77px;top:128.5px" width="13" height="13" viewBox="0 0 13 13"><path d="M1 12 L2 9.500 L7 4.500 L8.500 6 L3.500 11 Z" fill="#b9b9b9" stroke="#d8d8d8" stroke-width=".6"/><path d="M6.500 3 L10 6.500" stroke="#4fb3a6" stroke-width="1.600"/><path d="M8 4.800 L10.500 1.500 A1.300 1.300 0 0 1 12 3 L9 5.800 Z" fill="#4fb3a6"/></svg>
<i class="cb" style="left:98px;top:131px"></i>
<div class="a" style="left:119.3px;top:128.6px;width:28.5px;height:29px;background:#c6c6c6;border:1px solid #e0e0e0;border-right-color:#8a8a8a;border-bottom-color:#8a8a8a"><span class="t" style="left:0;width:26.5px;text-align:center;top:4.500px;font-size:9.500px;color:#111">无</span><span class="t" style="left:0;width:26.5px;text-align:center;top:16px;font-size:9.500px;color:#111">笔刷</span></div>
<span class="t" style="left:7.5px;top:148.2px;font-size:8px;color:#dcdcdc;">宽度</span>
<div class="a" style="left:44px;top:145.7px;width:46.5px;height:12px;background:#1d1d1d"><span class="t" style="left:2.500px;top:2.500px;font-size:7.500px;color:#4fb0a3">4 px</span></div>
<i class="cb" style="left:98px;top:147px"></i>
<span class="t" style="left:7.5px;top:164.7px;font-size:8px;color:#dcdcdc;">效果</span>
<div class="a" style="left:31.700000000000045px;top:162px;width:81px;height:12.3px;background:#1d1d1d;border-radius:2px"><span class="t" style="left:0;width:71px;text-align:center;top:2.4px;font-size:7.5px;color:#d8d8d8">&lt;纯色&gt;</span><i class="arr" style="left:71px;top:4.2px"></i></div>
<div class="a" style="left:119.29999999999995px;top:162px;width:20px;height:12.3px;background:#1d1d1d;border-radius:2px"><span class="t" style="left:0;width:20px;text-align:center;top:2.4px;font-size:7.5px;color:#888">...</span></div>
<i class="cb" style="left:8px;top:182px"></i><svg style="left:8px;top:181px" width="9" height="9" viewBox="0 0 9 9"><path d="M1.500 4.500 L3.800 7.500 L7.800 .8" fill="none" stroke="#63bdb0" stroke-width="1.300"/></svg>
<span class="t" style="left:20px;top:182px;font-size:8px;color:#dcdcdc;">圆角</span>
<div class="a" style="left:13px;top:193.5px;width:138px;height:1px;background:#262626"></div>
<span class="t" style="left:7.5px;top:202.6px;font-size:8px;color:#dcdcdc;">样式 1</span>
<div class="a" style="left:37px;top:199.8px;width:96px;height:12.5px;background:#1d1d1d;border-radius:2px"><span class="t" style="left:0;width:86px;text-align:center;top:2.5px;font-size:7.5px;color:#d8d8d8">&lt;无&gt;</span><i class="arr" style="left:86px;top:4.2px"></i></div>
<span class="t" style="left:7.5px;top:218.8px;font-size:8px;color:#dcdcdc;">样式 2</span>
<div class="a" style="left:37px;top:216px;width:96px;height:12.5px;background:#1d1d1d;border-radius:2px"><span class="t" style="left:0;width:86px;text-align:center;top:2.5px;font-size:7.5px;color:#d8d8d8">&lt;无&gt;</span><i class="arr" style="left:86px;top:4.2px"></i></div>
<span class="t" style="left:7.5px;top:235.3px;font-size:8px;color:#dcdcdc;">厚度</span>
<div class="a" style="left:37px;top:232.5px;width:42px;height:13px;background:#4b4b4b"></div>
<span class="t" style="left:7.5px;top:251.8px;font-size:8px;color:#dcdcdc;">色板</span>
<div class="a" style="left:37px;top:249px;width:96px;height:12.5px;background:#1d1d1d;border-radius:2px"><span class="t" style="left:0;width:86px;text-align:center;top:2.5px;font-size:7.5px;color:#d8d8d8">Basic Colors.png</span><i class="arr" style="left:86px;top:4.2px"></i></div>
<div class="a" style="left:16.0px;top:264.6px;width:133.3px;height:83.8px;background:#1c1c1c"></div>
<svg style="left:17.0px;top:265.6px" width="131.3" height="81.8" viewBox="0 0 160 100" preserveAspectRatio="none" shape-rendering="crispEdges">
<rect x="0" y="0" width="10.3" height="10.3" fill="#ff0000"/>
<rect x="10" y="0" width="10.3" height="10.3" fill="#ffff00"/>
<rect x="20" y="0" width="10.3" height="10.3" fill="#00ff00"/>
<rect x="30" y="0" width="10.3" height="10.3" fill="#00ffff"/>
<rect x="40" y="0" width="10.3" height="10.3" fill="#0000ff"/>
<rect x="50" y="0" width="10.3" height="10.3" fill="#ff00ff"/>
<rect x="60" y="0" width="10.3" height="10.3" fill="#ffffff"/>
<rect x="70" y="0" width="10.3" height="10.3" fill="#f2f2f2"/>
<rect x="80" y="0" width="10.3" height="10.3" fill="#e6e6e6"/>
<rect x="90" y="0" width="10.3" height="10.3" fill="#dadada"/>
<rect x="100" y="0" width="10.3" height="10.3" fill="#cfcfcf"/>
<rect x="110" y="0" width="10.3" height="10.3" fill="#c4c4c4"/>
<rect x="120" y="0" width="10.3" height="10.3" fill="#b9b9b9"/>
<rect x="130" y="0" width="10.3" height="10.3" fill="#afafaf"/>
<rect x="140" y="0" width="10.3" height="10.3" fill="#a5a5a5"/>
<rect x="150" y="0" width="10.3" height="10.3" fill="#9b9b9b"/>
<rect x="0" y="10" width="10.3" height="10.3" fill="#d7002f"/>
<rect x="10" y="10" width="10.3" height="10.3" fill="#fff100"/>
<rect x="20" y="10" width="10.3" height="10.3" fill="#009944"/>
<rect x="30" y="10" width="10.3" height="10.3" fill="#00a0e9"/>
<rect x="40" y="10" width="10.3" height="10.3" fill="#3b0f85"/>
<rect x="50" y="10" width="10.3" height="10.3" fill="#e4007f"/>
<rect x="60" y="10" width="10.3" height="10.3" fill="#8c8c8c"/>
<rect x="70" y="10" width="10.3" height="10.3" fill="#7d7d7d"/>
<rect x="80" y="10" width="10.3" height="10.3" fill="#6e6e6e"/>
<rect x="90" y="10" width="10.3" height="10.3" fill="#606060"/>
<rect x="100" y="10" width="10.3" height="10.3" fill="#525252"/>
<rect x="110" y="10" width="10.3" height="10.3" fill="#444444"/>
<rect x="120" y="10" width="10.3" height="10.3" fill="#363636"/>
<rect x="130" y="10" width="10.3" height="10.3" fill="#252525"/>
<rect x="140" y="10" width="10.3" height="10.3" fill="#0d0d0d"/>
<rect x="150" y="10" width="10.3" height="10.3" fill="#000000"/>
<rect x="0" y="20" width="10.3" height="10.3" fill="#f6a78d"/>
<rect x="10" y="20" width="10.3" height="10.3" fill="#f7b58a"/>
<rect x="20" y="20" width="10.3" height="10.3" fill="#f9c98e"/>
<rect x="30" y="20" width="10.3" height="10.3" fill="#fff39a"/>
<rect x="40" y="20" width="10.3" height="10.3" fill="#cfe0a0"/>
<rect x="50" y="20" width="10.3" height="10.3" fill="#a8d5a3"/>
<rect x="60" y="20" width="10.3" height="10.3" fill="#89cba0"/>
<rect x="70" y="20" width="10.3" height="10.3" fill="#8acdc8"/>
<rect x="80" y="20" width="10.3" height="10.3" fill="#8fcef4"/>
<rect x="90" y="20" width="10.3" height="10.3" fill="#8eace0"/>
<rect x="100" y="20" width="10.3" height="10.3" fill="#9a9fd6"/>
<rect x="110" y="20" width="10.3" height="10.3" fill="#a28fc8"/>
<rect x="120" y="20" width="10.3" height="10.3" fill="#b78cc6"/>
<rect x="130" y="20" width="10.3" height="10.3" fill="#cb8dc4"/>
<rect x="140" y="20" width="10.3" height="10.3" fill="#f39cc0"/>
<rect x="150" y="20" width="10.3" height="10.3" fill="#f49ca0"/>
<rect x="0" y="30" width="10.3" height="10.3" fill="#f07b5c"/>
<rect x="10" y="30" width="10.3" height="10.3" fill="#f39a5a"/>
<rect x="20" y="30" width="10.3" height="10.3" fill="#f6b85c"/>
<rect x="30" y="30" width="10.3" height="10.3" fill="#fff164"/>
<rect x="40" y="30" width="10.3" height="10.3" fill="#b3d86c"/>
<rect x="50" y="30" width="10.3" height="10.3" fill="#80c678"/>
<rect x="60" y="30" width="10.3" height="10.3" fill="#33b579"/>
<rect x="70" y="30" width="10.3" height="10.3" fill="#3cb8b3"/>
<rect x="80" y="30" width="10.3" height="10.3" fill="#44bbf0"/>
<rect x="90" y="30" width="10.3" height="10.3" fill="#5b8fd3"/>
<rect x="100" y="30" width="10.3" height="10.3" fill="#6b73bd"/>
<rect x="110" y="30" width="10.3" height="10.3" fill="#7a58ad"/>
<rect x="120" y="30" width="10.3" height="10.3" fill="#9b57a8"/>
<rect x="130" y="30" width="10.3" height="10.3" fill="#b45aa5"/>
<rect x="140" y="30" width="10.3" height="10.3" fill="#ee6aa0"/>
<rect x="150" y="30" width="10.3" height="10.3" fill="#ee6a7a"/>
<rect x="0" y="40" width="10.3" height="10.3" fill="#e60033"/>
<rect x="10" y="40" width="10.3" height="10.3" fill="#eb6120"/>
<rect x="20" y="40" width="10.3" height="10.3" fill="#f39800"/>
<rect x="30" y="40" width="10.3" height="10.3" fill="#fff100"/>
<rect x="40" y="40" width="10.3" height="10.3" fill="#8fc31f"/>
<rect x="50" y="40" width="10.3" height="10.3" fill="#09b140"/>
<rect x="60" y="40" width="10.3" height="10.3" fill="#009944"/>
<rect x="70" y="40" width="10.3" height="10.3" fill="#009e96"/>
<rect x="80" y="40" width="10.3" height="10.3" fill="#00a0e9"/>
<rect x="90" y="40" width="10.3" height="10.3" fill="#0068b7"/>
<rect x="100" y="40" width="10.3" height="10.3" fill="#2a3f9f"/>
<rect x="110" y="40" width="10.3" height="10.3" fill="#3b1485"/>
<rect x="120" y="40" width="10.3" height="10.3" fill="#601986"/>
<rect x="130" y="40" width="10.3" height="10.3" fill="#920783"/>
<rect x="140" y="40" width="10.3" height="10.3" fill="#e4007f"/>
<rect x="150" y="40" width="10.3" height="10.3" fill="#e5004f"/>
<rect x="0" y="50" width="10.3" height="10.3" fill="#a40024"/>
<rect x="10" y="50" width="10.3" height="10.3" fill="#a74214"/>
<rect x="20" y="50" width="10.3" height="10.3" fill="#ac6a00"/>
<rect x="30" y="50" width="10.3" height="10.3" fill="#b5a900"/>
<rect x="40" y="50" width="10.3" height="10.3" fill="#4f8a1c"/>
<rect x="50" y="50" width="10.3" height="10.3" fill="#007a2b"/>
<rect x="60" y="50" width="10.3" height="10.3" fill="#006e30"/>
<rect x="70" y="50" width="10.3" height="10.3" fill="#00716b"/>
<rect x="80" y="50" width="10.3" height="10.3" fill="#0073a8"/>
<rect x="90" y="50" width="10.3" height="10.3" fill="#004a86"/>
<rect x="100" y="50" width="10.3" height="10.3" fill="#1c2a70"/>
<rect x="110" y="50" width="10.3" height="10.3" fill="#290f5f"/>
<rect x="120" y="50" width="10.3" height="10.3" fill="#430f5e"/>
<rect x="130" y="50" width="10.3" height="10.3" fill="#680061"/>
<rect x="140" y="50" width="10.3" height="10.3" fill="#a3005a"/>
<rect x="150" y="50" width="10.3" height="10.3" fill="#a30037"/>
<rect x="0" y="60" width="10.3" height="10.3" fill="#7e0015"/>
<rect x="10" y="60" width="10.3" height="10.3" fill="#803008"/>
<rect x="20" y="60" width="10.3" height="10.3" fill="#834e00"/>
<rect x="30" y="60" width="10.3" height="10.3" fill="#8a8000"/>
<rect x="40" y="60" width="10.3" height="10.3" fill="#3a6a14"/>
<rect x="50" y="60" width="10.3" height="10.3" fill="#005c20"/>
<rect x="60" y="60" width="10.3" height="10.3" fill="#005323"/>
<rect x="70" y="60" width="10.3" height="10.3" fill="#005652"/>
<rect x="80" y="60" width="10.3" height="10.3" fill="#005680"/>
<rect x="90" y="60" width="10.3" height="10.3" fill="#003565"/>
<rect x="100" y="60" width="10.3" height="10.3" fill="#121b55"/>
<rect x="110" y="60" width="10.3" height="10.3" fill="#1d0748"/>
<rect x="120" y="60" width="10.3" height="10.3" fill="#320648"/>
<rect x="130" y="60" width="10.3" height="10.3" fill="#4c0146"/>
<rect x="140" y="60" width="10.3" height="10.3" fill="#7d0042"/>
<rect x="150" y="60" width="10.3" height="10.3" fill="#7d0022"/>
<rect x="0" y="70" width="10.3" height="10.3" fill="#c9b79c"/>
<rect x="10" y="70" width="10.3" height="10.3" fill="#9a8877"/>
<rect x="20" y="70" width="10.3" height="10.3" fill="#786657"/>
<rect x="30" y="70" width="10.3" height="10.3" fill="#594a42"/>
<rect x="40" y="70" width="10.3" height="10.3" fill="#3a2e2b"/>
<rect x="50" y="70" width="10.3" height="10.3" fill="#cfa972"/>
<rect x="60" y="70" width="10.3" height="10.3" fill="#b08850"/>
<rect x="70" y="70" width="10.3" height="10.3" fill="#916630"/>
<rect x="80" y="70" width="10.3" height="10.3" fill="#744a19"/>
<rect x="90" y="70" width="10.3" height="10.3" fill="#5e3410"/>
<rect x="100" y="70" width="10.3" height="10.3" fill="#ffffff"/>
<rect x="110" y="70" width="10.3" height="10.3" fill="#ffffd0"/>
<rect x="120" y="70" width="10.3" height="10.3" fill="#ffff9a"/>
<rect x="130" y="70" width="10.3" height="10.3" fill="#ffff60"/>
<rect x="140" y="70" width="10.3" height="10.3" fill="#ffff00"/>
<rect x="150" y="70" width="10.3" height="10.3" fill="#ffff00"/>
<rect x="0" y="80" width="10.3" height="10.3" fill="#ffdf20"/>
<rect x="10" y="80" width="10.3" height="10.3" fill="#ffccff"/>
<rect x="20" y="80" width="10.3" height="10.3" fill="#ffcccc"/>
<rect x="30" y="80" width="10.3" height="10.3" fill="#ffcc99"/>
<rect x="40" y="80" width="10.3" height="10.3" fill="#ffcb5c"/>
<rect x="50" y="80" width="10.3" height="10.3" fill="#ffcc10"/>
<rect x="60" y="80" width="10.3" height="10.3" fill="#ffcc00"/>
<rect x="70" y="80" width="10.3" height="10.3" fill="#ffaa00"/>
<rect x="80" y="80" width="10.3" height="10.3" fill="#ff99ff"/>
<rect x="90" y="80" width="10.3" height="10.3" fill="#ff99cc"/>
<rect x="100" y="80" width="10.3" height="10.3" fill="#ff9999"/>
<rect x="110" y="80" width="10.3" height="10.3" fill="#ff9966"/>
<rect x="120" y="80" width="10.3" height="10.3" fill="#ff9a2a"/>
<rect x="130" y="80" width="10.3" height="10.3" fill="#ff9a05"/>
<rect x="140" y="80" width="10.3" height="10.3" fill="#ff66ff"/>
<rect x="150" y="80" width="10.3" height="10.3" fill="#ff66cc"/>
<rect x="0" y="90" width="10.3" height="10.3" fill="#ff6699"/>
<rect x="10" y="90" width="10.3" height="10.3" fill="#ff6666"/>
<rect x="20" y="90" width="10.3" height="10.3" fill="#ff6633"/>
<rect x="30" y="90" width="10.3" height="10.3" fill="#ff6600"/>
<rect x="40" y="90" width="10.3" height="10.3" fill="#ff33cc"/>
<rect x="50" y="90" width="10.3" height="10.3" fill="#ff3399"/>
<rect x="60" y="90" width="10.3" height="10.3" fill="#ff3366"/>
<rect x="70" y="90" width="10.3" height="10.3" fill="#ff3333"/>
<rect x="80" y="90" width="10.3" height="10.3" fill="#ff3300"/>
<rect x="90" y="90" width="10.3" height="10.3" fill="#ff00ff"/>
<rect x="100" y="90" width="10.3" height="10.3" fill="#ff00cc"/>
<rect x="110" y="90" width="10.3" height="10.3" fill="#ff0099"/>
<rect x="120" y="90" width="10.3" height="10.3" fill="#ff0066"/>
<rect x="130" y="90" width="10.3" height="10.3" fill="#ff0033"/>
<rect x="140" y="90" width="10.3" height="10.3" fill="#ff0000"/>
<rect x="150" y="90" width="10.3" height="10.3" fill="#ffffff"/>
</svg>
<div class="a" style="left:29.4px;top:352.6px;width:31.5px;height:12px;background:#1d1d1d;border-radius:2px"><span class="t" style="left:0;width:31.5px;text-align:center;top:1px;font-size:10px;color:#f0f0f0">复制</span></div>
<div class="a" style="left:67.8px;top:352.6px;width:30.5px;height:12px;background:#1d1d1d;border-radius:2px"><span class="t" style="left:0;width:30.5px;text-align:center;top:1px;font-size:10px;color:#6c6c6c">粘贴</span></div>
<div class="a" style="left:105.0px;top:352.6px;width:31px;height:12px;background:#1d1d1d;border-radius:2px"><span class="t" style="left:0;width:31px;text-align:center;top:1px;font-size:10px;color:#f0f0f0">重置</span></div>
<i class="cb" style="left:8px;top:372px"></i><svg style="left:8px;top:371px" width="9" height="9" viewBox="0 0 9 9"><path d="M1.500 4.500 L3.800 7.500 L7.800 .8" fill="none" stroke="#63bdb0" stroke-width="1.300"/></svg>
<span class="t" style="left:20px;top:372.400px;font-size:7.5px;color:#dcdcdc;">高级设置</span>
<i class="cb" style="left:59.200px;top:372px"></i><svg style="left:59.200px;top:371px" width="9" height="9" viewBox="0 0 9 9"><path d="M1.500 4.500 L3.800 7.500 L7.800 .8" fill="none" stroke="#63bdb0" stroke-width="1.300"/></svg>
<span class="t" style="left:71px;top:372.400px;font-size:7.5px;color:#dcdcdc;">透显选择</span>
<div class="phead" style="left:2px;top:388.7px;width:173px;height:12.5px"><span class="t" style="left:79px;top:2px;font-size:9px">图层</span></div>
<div class="a" style="left:2.8px;top:402.8px;width:15.6px;height:12px;background:#1d1d1d;border-radius:1.500px"></div>
<div class="a" style="left:20.6px;top:402.8px;width:16.6px;height:12px;background:#1d1d1d;border-radius:1.500px"></div>
<div class="a" style="left:39.4px;top:402.8px;width:16.6px;height:12px;background:#1d1d1d;border-radius:1.500px"></div>
<div class="a" style="left:58.0px;top:402.8px;width:17.6px;height:12px;background:#1d1d1d;border-radius:1.500px"></div>
<div class="a" style="left:76.9px;top:402.8px;width:17.1px;height:12px;background:#1d1d1d;border-radius:1.500px"></div>
<div class="a" style="left:95.6px;top:402.8px;width:17.4px;height:12px;background:#1d1d1d;border-radius:1.500px"></div>
<div class="a" style="left:144.0px;top:402.8px;width:16.6px;height:12px;background:#1d1d1d;border-radius:1.500px"></div>
<!-- LI -->
<div class="a" style="left:3.8px;top:419px;width:75px;height:12px;background:#1d1d1d;border-radius:2px"><span class="t" style="left:7px;top:2.300px;font-size:7.500px;color:#dcdcdc">图层名称包含:</span><i class="arr" style="left:65px;top:4px"></i></div>
<div class="a" style="left:82px;top:418.5px;width:93px;height:12px;background:#c4c4c4"></div>
<div class="a" style="left:158.5px;top:405.3px;width:28px;height:28px;border-radius:14px;background:linear-gradient(180deg,#5a9cff,#2f7bf0)"></div>
<svg style="left:165px;top:414.5px" width="6" height="10" viewBox="0 0 6 10"><path d="M5 1 L1.200 5 L5 9" fill="none" stroke="#fff" stroke-width="1.500" stroke-linecap="round" stroke-linejoin="round"/></svg>
<div class="a" style="left:3px;top:433.4px;width:172px;height:14.600px;background:#1c1c1c"></div>
<div class="a" style="left:25.3px;top:433.4px;width:1px;height:14.600px;background:#333"></div>
<div class="a" style="left:41.9px;top:433.4px;width:1px;height:14.600px;background:#333"></div>
<span class="t" style="left:46.60000000000002px;top:437.0px;font-size:8px;color:#dcdcdc;">名称</span>
<div class="a" style="left:2.8px;top:449px;width:160.200px;height:15.600px;background:#60a89c"></div>
<div class="a" style="left:8px;top:451.2px;width:14.200px;height:11px;background:#404040;border:1px solid #777;border-radius:2px"></div>
<div class="a" style="left:28.8px;top:452px;width:9.200px;height:9.200px;background:#1a1a1a"></div>
<svg style="left:50px;top:454px" width="5" height="6" viewBox="0 0 5 6"><path d="M0 0 L5 3 L0 6 Z" fill="#c9d6d3"/></svg>
<span class="t" style="left:77.79999999999995px;top:452.8px;font-size:8.5px;color:#000;">Gruille</span>
<div class="a" style="left:163px;top:449px;width:12px;height:79px;background:#232323"></div>
<svg style="left:167px;top:518.5px" width="6" height="5" viewBox="0 0 6 5"><path d="M0 .5 H6 L3 4.500 Z" fill="#b5b5b5"/></svg>
<div class="a" style="left:2.8px;top:527.8px;width:160.200px;height:11px;background:#191919"></div>
<div class="a" style="left:15.3px;top:527.8px;width:22px;height:11px;background:#363636"></div>
<svg style="left:6px;top:531px" width="5" height="5" viewBox="0 0 5 5"><path d="M4.500 0 V5 L.5 2.500 Z" fill="#b5b5b5"/></svg>
<svg style="left:156px;top:531px" width="5" height="5" viewBox="0 0 5 5"><path d="M.5 0 V5 L4.500 2.500 Z" fill="#b5b5b5"/></svg>
<svg style="left:-905px;top:-61px" width="1080" height="611" viewBox="0 0 1080 611">
<path d="M910 468 L912 466 H917 V474 H910 Z" fill="none" stroke="#e6e6e6" stroke-width="1"/><path d="M919.500 466.500 V472.500 M916.500 469.500 H922.500" stroke="#5cc0b2" stroke-width="1.300"/>
<path d="M929.5 469 L931.5 467 H936.0 V474.5 H929.5 Z" fill="none" stroke="#e6e6e6" stroke-width="1"/><path d="M932.500 465.500 H939 V473" fill="none" stroke="#e6e6e6" stroke-width="1"/>
<path d="M947.5 468 L949.5 466 H954.5 V474 H947.5 Z" fill="none" stroke="#e6e6e6" stroke-width="1"/><path d="M952.500 470 H958.500 M956.500 467.800 L958.800 470 L956.500 472.200" fill="none" stroke="#5cc0b2" stroke-width="1.200"/>
<path d="M968.500 467 H975 M970.500 466.800 V465.800 H973 V466.800 M969.300 468.200 V473.500 H974.200 V468.200 M971 469.300 V472.300 M972.500 469.300 V472.300" fill="none" stroke="#555" stroke-width=".9"/>
<circle cx="987.500" cy="469.700" r=".9" fill="#e6e6e6"/><circle cx="990.500" cy="469.700" r=".9" fill="#e6e6e6"/><circle cx="993.500" cy="469.700" r=".9" fill="#e6e6e6"/>
<path d="M1005 467.5 L1007 465.5 H1011.5 V473.5 H1005 Z" fill="none" stroke="#e6e6e6" stroke-width="1"/><circle cx="1011.500" cy="471" r="2.800" fill="#1d1d1d" stroke="#e6e6e6" stroke-width=".9"/>
<path d="M1053.500 466 H1061 V474 H1056 L1053.500 471.500 Z M1053.500 471.500 H1056 V474" fill="none" stroke="#e6e6e6" stroke-width="1"/>
<ellipse cx="917" cy="502" rx="1.700" ry="1.500" fill="none" stroke="#e6e6e6" stroke-width=".9"/><ellipse cx="920.800" cy="502" rx="1.700" ry="1.500" fill="none" stroke="#e6e6e6" stroke-width=".9"/><circle cx="917.400" cy="502.300" r=".6" fill="#e6e6e6"/><circle cx="921.200" cy="502.300" r=".6" fill="#e6e6e6"/>
<circle cx="938.400" cy="502.700" r="2.800" fill="none" stroke="#e6e6e6" stroke-width=".9"/><path d="M937.300 498.700 H939.500 M938.400 499 V500 M938.400 502.700 V501" stroke="#e6e6e6" stroke-width=".9"/>
<ellipse cx="917.700" cy="517.800" rx="2.400" ry="2.600" fill="#fff"/><ellipse cx="922.700" cy="517.800" rx="2.400" ry="2.600" fill="#fff"/><circle cx="918.300" cy="518.300" r="1.300" fill="#111"/><circle cx="923.300" cy="518.300" r="1.300" fill="#111"/>
<path transform="translate(966 515) scale(.75)" d="M4.2 2.6 C3.9 1.2 2.2 .8 1.5 1.8 C.4 2.2 .4 3.600 1.2 4 C.4 4.400 .4 5.800 1.5 6.200 C2.2 7.200 3.900 6.800 4.200 5.400 L11.800 5.400 C12.100 6.800 13.800 7.200 14.500 6.200 C15.600 5.800 15.600 4.400 14.800 4 C15.600 3.600 15.600 2.200 14.500 1.800 C13.800 .8 12.100 1.200 11.800 2.600 Z" fill="none" stroke="#b5d8d2" stroke-width="1.300"/>
</svg>
</div>

<!-- ================= PLAYBACK BAR ================= -->
<div class="a" id="play" style="left:0;top:406px;width:905px;height:19px;background:#2c2c2c"></div><div class="a" style="left:0;top:405px;width:73px;height:1px;background:#1e1e1e"></div>
<!-- ================= TIMELINE ================= -->
<div class="a" id="tl" style="left:0;top:425px;width:905px;height:175px;background:#242424"></div>
<div class="a" id="tlc" style="left:0;top:405px;width:905px;height:195px;overflow:hidden;font-size:7.5px">
<div class="a" style="left:398.0px;top:3.8px;width:15.8px;height:12.5px;background:#1d1d1d;border-radius:2px;"></div>
<div class="a" style="left:415.5px;top:3.8px;width:17.0px;height:12.5px;background:#1d1d1d;border-radius:2px;"></div>
<div class="a" style="left:434.5px;top:3.8px;width:16.8px;height:12.5px;background:#1d1d1d;border-radius:2px;"></div>
<div class="a" style="left:637.5px;top:3.8px;width:17.0px;height:12.5px;background:#1d1d1d;border-radius:2px;"></div>
<svg style="left:0;top:-405px" width="905" height="611" viewBox="0 0 905 611"><g fill="none" stroke="#c8c8c8" stroke-width=".9"><path d="M400.500 411.500 L405.500 415 L400.500 418.500 Z M406.500 411.500 L411.500 415 L406.500 418.500 Z"/><path d="M420.500 411.500 L425.500 415 L420.500 418.500 Z M427 411.500 H428.500 V418.500 H427 Z"/><path d="M437.500 411.500 L442.500 415 L437.500 418.500 Z"/><circle cx="446" cy="415" r="2.800"/></g><path d="M642 413.500 H644 L646.500 411.300 V418.700 L644 416.500 H642 Z" fill="none" stroke="#c8c8c8" stroke-width=".9"/><path d="M648 413 C649.200 414.200 649.200 415.800 648 417 M649.500 411.500 C651.500 413.500 651.500 416.500 649.500 418.500" fill="none" stroke="#c8c8c8" stroke-width=".8"/></svg>
<span class="t" style="left:459.500px;top:7px;font-size:7.500px;color:#dcdcdc">当前帧</span>
<div class="a" style="left:486.3px;top:4.5px;width:56.2px;height:11.8px;background:#1c1c1c;border-radius:2px;"></div>
<span class="t" style="left:488.500px;top:7px;font-size:7.500px;color:#4fb0a3">0</span>
<span class="t" style="left:546.500px;top:7px;font-size:7.500px;color:#dcdcdc">结束帧</span>
<div class="a" style="left:572.5px;top:4.5px;width:56.3px;height:11.8px;background:#1c1c1c;border-radius:2px;"></div>
<span class="t" style="left:575px;top:7px;font-size:7.500px;color:#4fb0a3">124</span>

<div class="a" style="left:707.0px;top:3.8px;width:12.5px;height:11.2px;background:#1c1c1c;border-radius:2px;"></div>
<svg style="left:708.500px;top:5.5px" width="10" height="8" viewBox="0 0 10 8"><rect x=".5" y=".5" width="9" height="7" fill="none" stroke="#e6e6e6" stroke-width="1"/><path d="M2.500 4 H7.500 M3.500 2.800 L2.300 4 L3.500 5.200 M6.500 2.800 L7.700 4 L6.500 5.200" fill="none" stroke="#e6e6e6" stroke-width=".8"/></svg>
<div class="a" style="left:723px;top:4.5px;width:11.500px;height:11px;background:#2b2b2b;border:1px solid #3f8d83"></div>
<div class="a" style="left:736.300px;top:4.5px;width:11.200px;height:11px;background:#8b8782"></div><div class="a" style="left:741.600px;top:4.5px;width:.8px;height:11px;background:#555"></div>
<div class="a" style="left:749.300px;top:4.5px;width:10.700px;height:11px;background:#8b8782"></div><div class="a" style="left:749.300px;top:9.7px;width:10.700px;height:.8px;background:#555"></div>
<div class="a" style="left:761.800px;top:4.5px;width:11.200px;height:11px;background:#8b8782"></div><div class="a" style="left:767px;top:4.5px;width:.8px;height:11px;background:#555"></div><div class="a" style="left:761.800px;top:9.7px;width:11.200px;height:.8px;background:#555"></div>
<div class="a" style="left:780.0px;top:2.5px;width:14.3px;height:13.8px;background:#203f3b;border-radius:2px;border:1px solid #3f8d83;"></div>
<div class="a" style="left:830.0px;top:2.5px;width:13.8px;height:13.8px;background:#203f3b;border-radius:2px;border:1px solid #3f8d83;"></div>
<div class="a" style="left:847.0px;top:2.5px;width:13.5px;height:13.8px;background:#203f3b;border-radius:2px;border:1px solid #3f8d83;"></div>
<svg style="left:0;top:-405px" width="905" height="611" viewBox="0 0 905 611"><path d="M783.500 418.500 C783.500 407.500 791 407.500 791 418.500" fill="none" stroke="#e8e8e8" stroke-width="1.100"/><circle cx="783.500" cy="418.500" r="1.100" fill="#e8e8e8"/><circle cx="791" cy="418.500" r="1.100" fill="#e8e8e8"/><path d="M782 419.800 H792.500" stroke="#e8e8e8" stroke-width=".6"/><circle cx="804" cy="414.500" r="5.800" fill="none" stroke="#e8e8e8" stroke-width="1.100"/><text x="804" y="416.800" text-anchor="middle" font-family="Liberation Sans,sans-serif" font-weight="bold" font-size="6" fill="#e8e8e8">FX</text><rect x="815" y="408.500" width="11" height="12" fill="#111" stroke="#e8e8e8" stroke-width="1.100"/><text x="820.500" y="416.800" text-anchor="middle" font-family="Liberation Sans,sans-serif" font-weight="bold" font-size="6" fill="#e8e8e8">FX</text><path d="M832 412.500 C834 411 836 412.500 837 412.500 C838 412.500 840 411 842 412.500 C842.500 415 841 417.500 839.500 417.500 C838 417.500 837.500 416 837 416 C836.500 416 836 417.500 834.500 417.500 C833 417.500 831.500 415 832 412.500 Z" fill="#b9c9c6" stroke="#dfe9e7" stroke-width=".5"/><ellipse cx="834.700" cy="414.300" rx="1.200" ry=".8" fill="#203f3b"/><ellipse cx="839.300" cy="414.300" rx="1.200" ry=".8" fill="#203f3b"/><path d="M858.500 409.500 L853 415.500" stroke="#e8e8e8" stroke-width="1.400"/><path d="M853.300 414.500 C851.500 415 851 417.500 849 419 C851.500 419.500 854 418.500 854.500 416 Z" fill="#e8e8e8"/></svg>
<div class="a" style="left:863.5px;top:3.2px;width:37.9px;height:13.2px;background:#222;border-radius:2px;"></div>
<span class="t" style="left:869.500px;top:6.300px;font-size:8px;color:#dcdcdc">展示</span><i class="arr" style="left:891.500px;top:8px"></i>
<div class="a" style="left:0;top:19.500px;width:905px;height:20.500px;background:#272727;border-top:1.500px solid #1a1a1a"></div><div class="a" style="left:0;top:21px;width:27.800px;height:174px;background:#2e2e2e"></div><div class="a" style="left:861px;top:21px;width:40px;height:19px;background:#2b2b2b"></div>
<div class="a" style="left:31.2px;top:23.5px;width:18px;height:13.5px;background:#1c1c1c;border-radius:2px;"></div>
<span class="t" style="left:33.500px;top:25px;font-size:11px;color:#f0f0f0">0</span>
<svg style="left:40px;top:24.5px" width="9" height="10" viewBox="0 0 9 10"><path d="M1 3 H7.500 M5.500 1 L7.800 3 L5.500 5 M8 7 H1.500 M3.500 5 L1.200 7 L3.500 9" fill="none" stroke="#f0f0f0" stroke-width="1.100"/></svg>
<div class="a" style="left:55.6px;top:23.5px;width:27px;height:14px;background:#345f59;border-radius:2.500px;border:1px solid #3b6f68;"></div>
<svg style="left:58px;top:26px" width="22" height="9" viewBox="0 0 22 9"><path d="M4 4.500 H18" stroke="#ececec" stroke-width="1.300"/><circle cx="4" cy="4.500" r="3" fill="#ececec"/><circle cx="18" cy="4.500" r="3" fill="#ececec"/></svg>
<div class="a" style="left:86px;top:25px;width:8px;height:6px;background:#c8c8c8"></div>
<i class="arr" style="left:400px;top:29px"></i>
<svg style="left:410.500px;top:24.3px" width="17" height="13" viewBox="0 0 17 13"><rect x=".6" y=".6" width="15.800" height="11.800" fill="#1c1c1c" stroke="#e0e0e0" stroke-width="1.100"/><path d="M.6 2.600 H16.400" stroke="#e0e0e0" stroke-width="1"/><text x="8.500" y="11" text-anchor="middle" font-family="Liberation Sans,sans-serif" font-weight="bold" font-size="8.500" fill="#e0e0e0">K</text></svg>
<div class="a" style="left:505.0px;top:24.5px;width:18.3px;height:12.5px;background:#1c1c1c;border-radius:2px"></div><div class="a" style="left:530.8px;top:24.5px;width:18.0px;height:12.5px;background:#1c1c1c;border-radius:2px"></div><div class="a" style="left:550.8px;top:24.5px;width:16.2px;height:12.5px;background:#1c1c1c;border-radius:2px"></div><div class="a" style="left:568.8px;top:24.5px;width:16.7px;height:12.5px;background:#1c1c1c;border-radius:2px"></div>
<div class="a" style="left:435.0px;top:24.5px;width:17.5px;height:12.5px;background:#1c1c1c;border-radius:2px;"></div>
<div class="a" style="left:453.8px;top:24.5px;width:17.5px;height:12.5px;background:#1c1c1c;border-radius:2px;"></div>
<div class="a" style="left:472.0px;top:25.0px;width:25.5px;height:11.5px;background:#1c1c1c;border-radius:2px;"></div>
<svg style="left:0;top:-405px" width="905" height="611" viewBox="0 0 905 611"><circle cx="439.800" cy="435.700" r="3" fill="#d8d8d8"/><path d="M450.500 435.700 H444.500 M447 433.300 L444.300 435.700 L447 438.100" fill="none" stroke="#4fb0a3" stroke-width="1.200"/><circle cx="466.200" cy="435.700" r="3" fill="#d8d8d8"/><path d="M455.500 435.700 H461.500 M459 433.300 L461.700 435.700 L459 438.100" fill="none" stroke="#4fb0a3" stroke-width="1.200"/><path d="M510.500 430.500 H517 V437.500 L513.700 441 L510.500 437.500 Z" fill="none" stroke="#e6e6e6" stroke-width="1.100"/><path d="M519.500 437.500 V441.500 M517.500 439.500 H521.500" stroke="#4fb0a3" stroke-width="1.100"/><circle cx="534.500" cy="431.500" r="1.600" fill="none" stroke="#e6e6e6" stroke-width=".9"/><circle cx="534.500" cy="435.700" r="1.600" fill="none" stroke="#e6e6e6" stroke-width=".9"/><circle cx="534.500" cy="440" r="1.600" fill="none" stroke="#e6e6e6" stroke-width=".9"/><path d="M536 431.500 C540 431.500 540 435.700 543 435.700 M536 435.700 H543 M536 440 C540 440 540 435.700 543 435.700" fill="none" stroke="#e6e6e6" stroke-width=".9"/><circle cx="545" cy="435.700" r="2.100" fill="#4fb0a3"/><path d="M553.500 432.500 H556.500 L557.500 431 H560.500 L561.500 432.500 H564.500 V440.500 H553.500 Z" fill="none" stroke="#e6e6e6" stroke-width="1"/><circle cx="559" cy="436.500" r="2.200" fill="none" stroke="#e6e6e6" stroke-width=".9"/><path d="M552.500 430 L565.500 442" stroke="#4fb0a3" stroke-width="1.200"/><path d="M574 430.500 H580.500 V437.500 L577.200 441 L574 437.500 Z" fill="none" stroke="#e6e6e6" stroke-width="1.100"/><path d="M571.500 430 L583 442" stroke="#4fb0a3" stroke-width="1.200"/></svg>
<span class="t" style="left:475px;top:27px;font-size:7.500px;color:#4fb0a3">2</span>
<div class="a" style="left:862.0px;top:24.5px;width:16.8px;height:12.5px;background:#1c1c1c;border-radius:2px;"></div>
<div class="a" style="left:880.5px;top:24.5px;width:18.3px;height:12.5px;background:#1c1c1c;border-radius:2px;"></div>
<svg style="left:0;top:-405px" width="905" height="611" viewBox="0 0 905 611"><g fill="none" stroke="#e6e6e6"><circle cx="871.500" cy="434.800" r="3.600" stroke-width="1"/><path d="M869.500 434.800 H873.500" stroke-width="1"/><path d="M868.800 437.800 L865.800 441" stroke-width="1.600"/><circle cx="890.800" cy="434.800" r="3.600" stroke-width="1"/><path d="M888.800 434.800 H892.800 M890.800 432.800 V436.800" stroke-width="1"/><path d="M888.100 437.800 L885.100 441" stroke-width="1.600"/></g></svg>
<div class="a" style="left:27.800px;top:39.5px;width:877px;height:23.500px;background:#1e1e1e"></div>
<div class="a" style="left:27.800px;top:40.2px;width:861.800px;height:9.800px;background:#1c1c1c"></div>
<div class="a" style="left:31px;top:40.2px;width:751.5px;height:9.800px;background:linear-gradient(180deg,#3f766e,#345f59)"></div>
<svg style="left:40.400px;top:40.2px" width="12" height="10" viewBox="0 0 12 10"><path d="M0 0 L11.500 4.800 L0 9.800 Z" fill="#10a710"/></svg>
<span class="t" style="left:31.500px;top:41.3px;font-size:8px;color:#7fd6c9;text-decoration:underline">0</span>
<span class="t" style="left:60.2px;width:20px;text-align:center;top:41.8px;font-size:7.500px;color:#e2e2e2">6</span>
<span class="t" style="left:96.4px;width:20px;text-align:center;top:41.8px;font-size:7.500px;color:#e2e2e2">12</span>
<span class="t" style="left:132.5px;width:20px;text-align:center;top:41.8px;font-size:7.500px;color:#e2e2e2">18</span>
<span class="t" style="left:168.7px;width:20px;text-align:center;top:41.8px;font-size:7.500px;color:#e2e2e2">24</span>
<span class="t" style="left:204.9px;width:20px;text-align:center;top:41.8px;font-size:7.500px;color:#e2e2e2">30</span>
<span class="t" style="left:241.1px;width:20px;text-align:center;top:41.8px;font-size:7.500px;color:#e2e2e2">36</span>
<span class="t" style="left:277.3px;width:20px;text-align:center;top:41.8px;font-size:7.500px;color:#e2e2e2">42</span>
<span class="t" style="left:313.4px;width:20px;text-align:center;top:41.8px;font-size:7.500px;color:#e2e2e2">48</span>
<span class="t" style="left:349.6px;width:20px;text-align:center;top:41.8px;font-size:7.500px;color:#e2e2e2">54</span>
<span class="t" style="left:385.8px;width:20px;text-align:center;top:41.8px;font-size:7.500px;color:#e2e2e2">60</span>
<span class="t" style="left:422.0px;width:20px;text-align:center;top:41.8px;font-size:7.500px;color:#e2e2e2">66</span>
<span class="t" style="left:458.2px;width:20px;text-align:center;top:41.8px;font-size:7.500px;color:#e2e2e2">72</span>
<span class="t" style="left:494.3px;width:20px;text-align:center;top:41.8px;font-size:7.500px;color:#e2e2e2">78</span>
<span class="t" style="left:530.5px;width:20px;text-align:center;top:41.8px;font-size:7.500px;color:#e2e2e2">84</span>
<span class="t" style="left:566.7px;width:20px;text-align:center;top:41.8px;font-size:7.500px;color:#e2e2e2">90</span>
<span class="t" style="left:602.9px;width:20px;text-align:center;top:41.8px;font-size:7.500px;color:#e2e2e2">96</span>
<span class="t" style="left:639.1px;width:20px;text-align:center;top:41.8px;font-size:7.500px;color:#e2e2e2">102</span>
<span class="t" style="left:675.2px;width:20px;text-align:center;top:41.8px;font-size:7.500px;color:#e2e2e2">108</span>
<span class="t" style="left:711.4px;width:20px;text-align:center;top:41.8px;font-size:7.500px;color:#e2e2e2">114</span>
<span class="t" style="left:747.6px;width:20px;text-align:center;top:41.8px;font-size:7.500px;color:#e2e2e2">120</span>
<span class="t" style="left:783.8px;width:20px;text-align:center;top:41.8px;font-size:7.500px;color:#e2e2e2">126</span>
<span class="t" style="left:820.0px;width:20px;text-align:center;top:41.8px;font-size:7.500px;color:#e2e2e2">132</span>
<span class="t" style="left:856.1px;width:20px;text-align:center;top:41.8px;font-size:7.500px;color:#e2e2e2">138</span>

<div class="a" style="left:0;top:62.8px;width:27.800px;height:133px;background:#2e2e2e"></div>
<div class="a" style="left:27.800px;top:62.8px;width:861.800px;height:121px;background:linear-gradient(180deg,#282828,#323232 60%,#343434)"></div>
<svg style="left:0;top:-405px" width="905" height="611" viewBox="0 0 905 611">
<g stroke="#434343" stroke-width=".8">
<path d="M40.6 477 V588.500"/>
<path d="M52.7 477 V588.500"/>
<path d="M64.8 477 V588.500"/>
<path d="M76.8 477 V588.500"/>
<path d="M88.9 477 V588.500"/>
<path d="M100.9 477 V588.500"/>
<path d="M113.0 477 V588.500"/>
<path d="M125.0 477 V588.500"/>
<path d="M137.1 477 V588.500"/>
<path d="M149.2 477 V588.500"/>
<path d="M161.2 477 V588.500"/>
<path d="M173.3 477 V588.500"/>
<path d="M185.3 477 V588.500"/>
<path d="M197.4 477 V588.500"/>
<path d="M209.5 477 V588.500"/>
<path d="M221.5 477 V588.500"/>
<path d="M233.6 477 V588.500"/>
<path d="M245.7 477 V588.500"/>
<path d="M257.7 477 V588.500"/>
<path d="M269.8 477 V588.500"/>
<path d="M281.8 477 V588.500"/>
<path d="M293.9 477 V588.500"/>
<path d="M306.0 477 V588.500"/>
<path d="M318.0 477 V588.500"/>
<path d="M330.1 477 V588.500"/>
<path d="M342.1 477 V588.500"/>
<path d="M354.2 477 V588.500"/>
<path d="M366.3 477 V588.500"/>
<path d="M378.3 477 V588.500"/>
<path d="M390.4 477 V588.500"/>
<path d="M402.4 477 V588.500"/>
<path d="M414.5 477 V588.500"/>
<path d="M426.6 477 V588.500"/>
<path d="M438.6 477 V588.500"/>
<path d="M450.7 477 V588.500"/>
<path d="M462.7 477 V588.500"/>
<path d="M474.8 477 V588.500"/>
<path d="M486.9 477 V588.500"/>
<path d="M498.9 477 V588.500"/>
<path d="M511.0 477 V588.500"/>
<path d="M523.0 477 V588.500"/>
<path d="M535.1 477 V588.500"/>
<path d="M547.2 477 V588.500"/>
<path d="M559.2 477 V588.500"/>
<path d="M571.3 477 V588.500"/>
<path d="M583.3 477 V588.500"/>
<path d="M595.4 477 V588.500"/>
<path d="M607.5 477 V588.500"/>
<path d="M619.5 477 V588.500"/>
<path d="M631.6 477 V588.500"/>
<path d="M643.6 477 V588.500"/>
<path d="M655.7 477 V588.500"/>
<path d="M667.8 477 V588.500"/>
<path d="M679.8 477 V588.500"/>
<path d="M691.9 477 V588.500"/>
<path d="M703.9 477 V588.500"/>
<path d="M716.0 477 V588.500"/>
<path d="M728.1 477 V588.500"/>
<path d="M740.1 477 V588.500"/>
<path d="M752.2 477 V588.500"/>
<path d="M764.2 477 V588.500"/>
<path d="M776.3 477 V588.500"/>
<path d="M788.4 477 V588.500"/>
<path d="M800.4 477 V588.500"/>
<path d="M812.5 477 V588.500"/>
<path d="M824.5 477 V588.500"/>
<path d="M836.6 477 V588.500"/>
<path d="M848.7 477 V588.500"/>
<path d="M860.7 477 V588.500"/>
<path d="M872.8 477 V588.500"/>
<path d="M884.8 477 V588.500"/>
</g><g stroke="#3a3a3a" stroke-width=".8">
<path d="M40 483.5 H889.500"/>
<path d="M40 496.6 H889.500"/>
<path d="M40 509.3 H889.500"/>
</g><g stroke="#6e6e6e" stroke-width="1">
<path d="M178.7 478.500 V588.500"/>
<path d="M323.4 478.500 V588.500"/>
<path d="M468.2 478.500 V588.500"/>
<path d="M612.9 478.500 V588.500"/>
<path d="M757.6 478.500 V588.500"/>
</g>
<path d="M40 535 H889.500 M40 547.600 H889.500" stroke="#8c2424" stroke-width="1.200"/>
<path d="M34.300 455 V588.500" stroke="#58ab9f" stroke-width="1.400"/>
<circle cx="34.300" cy="472.800" r="2.300" fill="#2b2b2b" stroke="#6f8f8a" stroke-width=".8"/>
<g fill="#d6d6d6" stroke="#1c1c1c" stroke-width=".9">
<circle cx="34.3" cy="483.5" r="2.600"/>
<circle cx="40.3" cy="483.5" r="2.600"/>
<circle cx="130.8" cy="483.5" r="2.600"/>
<circle cx="142.8" cy="483.5" r="2.600"/>
<circle cx="148.9" cy="483.5" r="2.600"/>
<circle cx="154.9" cy="483.5" r="2.600"/>
<circle cx="167.0" cy="483.5" r="2.600"/>
<circle cx="173.0" cy="483.5" r="2.600"/>
<circle cx="179.0" cy="483.5" r="2.600"/>
<circle cx="203.1" cy="483.5" r="2.600"/>
<circle cx="209.2" cy="483.5" r="2.600"/>
<circle cx="215.2" cy="483.5" r="2.600"/>
<circle cx="221.2" cy="483.5" r="2.600"/>
<circle cx="227.3" cy="483.5" r="2.600"/>
<circle cx="233.3" cy="483.5" r="2.600"/>
<circle cx="245.4" cy="483.5" r="2.600"/>
<circle cx="251.4" cy="483.5" r="2.600"/>
<circle cx="263.4" cy="483.5" r="2.600"/>
<circle cx="269.5" cy="483.5" r="2.600"/>
<circle cx="275.5" cy="483.5" r="2.600"/>
<circle cx="287.6" cy="483.5" r="2.600"/>
<circle cx="293.6" cy="483.5" r="2.600"/>
<circle cx="299.6" cy="483.5" r="2.600"/>
<circle cx="305.7" cy="483.5" r="2.600"/>
<circle cx="311.7" cy="483.5" r="2.600"/>
<circle cx="323.7" cy="483.5" r="2.600"/>
<circle cx="347.9" cy="483.5" r="2.600"/>
<circle cx="353.9" cy="483.5" r="2.600"/>
<circle cx="359.9" cy="483.5" r="2.600"/>
<circle cx="378.0" cy="483.5" r="2.600"/>
<circle cx="402.1" cy="483.5" r="2.600"/>
<circle cx="414.2" cy="483.5" r="2.600"/>
<circle cx="420.2" cy="483.5" r="2.600"/>
<circle cx="426.2" cy="483.5" r="2.600"/>
<circle cx="432.3" cy="483.5" r="2.600"/>
<circle cx="438.3" cy="483.5" r="2.600"/>
<circle cx="480.5" cy="483.5" r="2.600"/>
<circle cx="486.6" cy="483.5" r="2.600"/>
<circle cx="492.6" cy="483.5" r="2.600"/>
<circle cx="498.6" cy="483.5" r="2.600"/>
<circle cx="504.6" cy="483.5" r="2.600"/>
<circle cx="510.7" cy="483.5" r="2.600"/>
<circle cx="516.7" cy="483.5" r="2.600"/>
<circle cx="540.8" cy="483.5" r="2.600"/>
<circle cx="546.9" cy="483.5" r="2.600"/>
<circle cx="558.9" cy="483.5" r="2.600"/>
<circle cx="564.9" cy="483.5" r="2.600"/>
<circle cx="571.0" cy="483.5" r="2.600"/>
<circle cx="577.0" cy="483.5" r="2.600"/>
<circle cx="655.4" cy="483.5" r="2.600"/>
<circle cx="667.4" cy="483.5" r="2.600"/>
<circle cx="679.5" cy="483.5" r="2.600"/>
<circle cx="697.6" cy="483.5" r="2.600"/>
<circle cx="733.8" cy="483.5" r="2.600"/>
<circle cx="34.3" cy="496.6" r="2.600"/>
<circle cx="203.1" cy="496.6" r="2.600"/>
<circle cx="227.3" cy="496.6" r="2.600"/>
<circle cx="245.4" cy="496.6" r="2.600"/>
<circle cx="402.1" cy="496.6" r="2.600"/>
<circle cx="414.2" cy="496.6" r="2.600"/>
<circle cx="432.3" cy="496.6" r="2.600"/>
<circle cx="438.3" cy="496.6" r="2.600"/>
<circle cx="480.5" cy="496.6" r="2.600"/>
<circle cx="492.6" cy="496.6" r="2.600"/>
<circle cx="516.7" cy="496.6" r="2.600"/>
<circle cx="534.8" cy="496.6" r="2.600"/>
<circle cx="540.8" cy="496.6" r="2.600"/>
<circle cx="546.9" cy="496.6" r="2.600"/>
<circle cx="552.9" cy="496.6" r="2.600"/>
<circle cx="564.9" cy="496.6" r="2.600"/>
<circle cx="577.0" cy="496.6" r="2.600"/>
<circle cx="655.4" cy="496.6" r="2.600"/>
<circle cx="667.4" cy="496.6" r="2.600"/>
<circle cx="679.5" cy="496.6" r="2.600"/>
<circle cx="34.3" cy="509.3" r="2.600"/>
<circle cx="209.2" cy="509.3" r="2.600"/>
<circle cx="221.2" cy="509.3" r="2.600"/>
<circle cx="239.3" cy="509.3" r="2.600"/>
<circle cx="257.4" cy="509.3" r="2.600"/>
<circle cx="402.1" cy="509.3" r="2.600"/>
<circle cx="420.2" cy="509.3" r="2.600"/>
<circle cx="438.3" cy="509.3" r="2.600"/>
<circle cx="450.4" cy="509.3" r="2.600"/>
<circle cx="516.7" cy="509.3" r="2.600"/>
<circle cx="534.8" cy="509.3" r="2.600"/>
<circle cx="552.9" cy="509.3" r="2.600"/>
<circle cx="564.9" cy="509.3" r="2.600"/>
<circle cx="34.3" cy="535" r="2.600"/>
<circle cx="40.3" cy="535" r="2.600"/>
<circle cx="130.8" cy="535" r="2.600"/>
<circle cx="167.0" cy="535" r="2.600"/>
<circle cx="209.2" cy="535" r="2.600"/>
<circle cx="245.4" cy="535" r="2.600"/>
<circle cx="269.5" cy="535" r="2.600"/>
<circle cx="293.6" cy="535" r="2.600"/>
<circle cx="347.9" cy="535" r="2.600"/>
<circle cx="402.1" cy="535" r="2.600"/>
<circle cx="414.2" cy="535" r="2.600"/>
<circle cx="426.2" cy="535" r="2.600"/>
<circle cx="438.3" cy="535" r="2.600"/>
<circle cx="480.5" cy="535" r="2.600"/>
<circle cx="510.7" cy="535" r="2.600"/>
<circle cx="516.7" cy="535" r="2.600"/>
<circle cx="540.8" cy="535" r="2.600"/>
<circle cx="564.9" cy="535" r="2.600"/>
<circle cx="655.4" cy="535" r="2.600"/>
<circle cx="679.5" cy="535" r="2.600"/>
<circle cx="34.3" cy="547.6" r="2.600"/>
<circle cx="480.5" cy="547.6" r="2.600"/>
<circle cx="516.7" cy="547.6" r="2.600"/>
<circle cx="540.8" cy="547.6" r="2.600"/>
<circle cx="564.9" cy="547.6" r="2.600"/>
<circle cx="655.4" cy="547.6" r="2.600"/>
<circle cx="679.5" cy="547.6" r="2.600"/>
</g>
<g fill="#d2d2d2">
<circle cx="19.800" cy="483" r="1.900"/>
<circle cx="19.800" cy="496.3" r="1.900"/>
<circle cx="19.800" cy="509" r="1.900"/>
<circle cx="19.800" cy="534.5" r="1.900"/>
<circle cx="19.800" cy="547.3" r="1.900"/>
</g>
<g font-family="Liberation Sans,sans-serif" font-size="7.500" fill="#bdbdbd">
<text x="178.7" y="476.500" text-anchor="middle">1</text>
<text x="323.4" y="476.500" text-anchor="middle">2</text>
<text x="468.2" y="476.500" text-anchor="middle">3</text>
<text x="612.9" y="476.500" text-anchor="middle">4</text>
<text x="757.6" y="476.500" text-anchor="middle">5</text>
</g>
<path transform="translate(-1.500 474.5) scale(.85)" d="M4.2 2.6 C3.9 1.2 2.2 .8 1.5 1.8 C.4 2.2 .4 3.600 1.2 4 C.4 4.400 .4 5.800 1.5 6.200 C2.2 7.200 3.900 6.800 4.200 5.400 L11.800 5.400 C12.100 6.800 13.800 7.200 14.500 6.200 C15.600 5.800 15.600 4.400 14.800 4 C15.600 3.600 15.600 2.200 14.500 1.800 C13.800 .8 12.100 1.200 11.800 2.600 Z" fill="none" stroke="#e0e0e0" stroke-width="1.200"/><path d="M7.800 482.5 A2 2 0 1 0 7.800 485.8" fill="none" stroke="#e0e0e0" stroke-width="1.100"/>
<path transform="translate(-1.500 487.0) scale(.85)" d="M4.2 2.6 C3.9 1.2 2.2 .8 1.5 1.8 C.4 2.2 .4 3.600 1.2 4 C.4 4.400 .4 5.800 1.5 6.200 C2.2 7.200 3.900 6.800 4.200 5.400 L11.800 5.400 C12.100 6.800 13.800 7.200 14.500 6.200 C15.600 5.800 15.600 4.400 14.800 4 C15.600 3.600 15.600 2.200 14.500 1.800 C13.800 .8 12.100 1.200 11.800 2.600 Z" fill="none" stroke="#e0e0e0" stroke-width="1.200"/><path d="M5.500 494.5 V499.5 M3 497.0 H8" stroke="#e0e0e0" stroke-width="1.100"/>
<path transform="translate(-1.500 499.5) scale(.85)" d="M4.2 2.6 C3.9 1.2 2.2 .8 1.5 1.8 C.4 2.2 .4 3.600 1.2 4 C.4 4.400 .4 5.800 1.5 6.200 C2.2 7.200 3.900 6.800 4.200 5.400 L11.800 5.400 C12.100 6.800 13.800 7.200 14.500 6.200 C15.600 5.800 15.600 4.400 14.800 4 C15.600 3.600 15.600 2.200 14.500 1.800 C13.800 .8 12.100 1.200 11.800 2.600 Z" fill="none" stroke="#e0e0e0" stroke-width="1.200"/><path d="M0 510 H11 M1.500 508.5 L0 510 L1.500 511.5 M9.500 508.5 L11 510 L9.500 511.5" fill="none" stroke="#e0e0e0" stroke-width=".9"/>
<path transform="translate(-1.500 526.0) scale(.85)" d="M4.2 2.6 C3.9 1.2 2.2 .8 1.5 1.8 C.4 2.2 .4 3.600 1.2 4 C.4 4.400 .4 5.800 1.5 6.200 C2.2 7.200 3.900 6.800 4.200 5.400 L11.800 5.400 C12.100 6.800 13.800 7.200 14.500 6.200 C15.600 5.800 15.600 4.400 14.800 4 C15.600 3.600 15.600 2.200 14.500 1.800 C13.800 .8 12.100 1.200 11.800 2.600 Z" fill="none" stroke="#d81f1f" stroke-width="1.200"/><path d="M7.800 534.0 A2 2 0 1 0 7.800 537.3" fill="none" stroke="#d81f1f" stroke-width="1.100"/>
<path transform="translate(-1.500 538.5) scale(.85)" d="M4.2 2.6 C3.9 1.2 2.2 .8 1.5 1.8 C.4 2.2 .4 3.600 1.2 4 C.4 4.400 .4 5.800 1.5 6.200 C2.2 7.200 3.900 6.800 4.200 5.400 L11.800 5.400 C12.100 6.800 13.800 7.200 14.500 6.200 C15.600 5.800 15.600 4.400 14.800 4 C15.600 3.600 15.600 2.200 14.500 1.800 C13.800 .8 12.100 1.200 11.800 2.600 Z" fill="none" stroke="#d81f1f" stroke-width="1.200"/><path d="M5.500 546 V551 M3 548.5 H8" stroke="#d81f1f" stroke-width="1.100"/>
</svg>
<div class="a" style="left:27.800px;top:183.7px;width:861.800px;height:10.300px;background:#1a1a1a"></div>
<div class="a" style="left:41.700px;top:183.7px;width:21.600px;height:10.300px;background:#363636"></div>
<svg style="left:31px;top:186.5px" width="5" height="5" viewBox="0 0 5 5"><path d="M4.500 0 V5 L.5 2.500 Z" fill="#b5b5b5"/></svg>
<svg style="left:882px;top:186.5px" width="5" height="5" viewBox="0 0 5 5"><path d="M.5 0 V5 L4.500 2.500 Z" fill="#b5b5b5"/></svg>
<div class="a" style="left:889.600px;top:39.5px;width:11.400px;height:155px;background:#1f1f1f"></div>
<svg style="left:893.500px;top:43px" width="6" height="5" viewBox="0 0 6 5"><path d="M0 4.500 H6 L3 .5 Z" fill="#b5b5b5"/></svg>
<svg style="left:892.500px;top:174.5px" width="6" height="5" viewBox="0 0 6 5"><path d="M0 .5 H6 L3 4.500 Z" fill="#b5b5b5"/></svg>
<div class="a" style="left:901px;top:0;width:4px;height:195px;background:#1d1d1d"></div>
</div>

<!-- ================= STATUS BAR ================= -->
<div class="a" id="status" style="left:0;top:600px;width:1080px;height:11px;background:#333333">
  <span class="t" style="left:0;top:2px;font-size:7.500px;color:#cfcfcf">点击选择骨骼 (按住 &lt;shift&gt; 加选/减选骨骼, 按住 &lt;ctrl/cmd&gt; 启用套索模式)</span>
  <span class="t" style="left:1050px;top:2px;font-size:7.500px;color:#cfcfcf">帧: 0</span>
</div>
<!-- ================= LIBRARY DIALOG ================= -->
<div class="a" id="dlg" style="left:94px;top:79px;width:302px;height:383px;background:#323232;border-radius:9px;border:1px solid #5c5c5c;box-shadow:0 0 0 .5px #111,0 5px 14px rgba(0,0,0,.6)">
</div>
<div class="a" id="dlgc" style="left:94px;top:79px;width:302px;height:383px;border-radius:9px;overflow:hidden;font-size:8px">
  <!-- title -->
  <div class="a" style="left:0;top:0;width:302px;height:21px;background:#333335;border-bottom:1px solid #1a1a1a"></div>
  <div class="a" style="left:5.500px;top:6px;width:10px;height:10px;border-radius:5px;background:#ec6a5e"></div>
  <div class="a" style="left:20.500px;top:6px;width:10px;height:10px;border-radius:5px;background:#f4bf4f"></div>
  <div class="a" style="left:35.500px;top:6px;width:10px;height:10px;border-radius:5px;background:#61c554"></div>
  <span class="t" style="left:136px;top:6px;font-size:10px;color:#cfcfcf">资料库</span>
  <!-- tabs -->
  <div class="a" style="left:0;top:21px;width:302px;height:16px;background:#2a2a2a;border-bottom:1px solid #1c1c1c"></div>
  <div class="a" style="left:8px;top:21px;width:36px;height:16px;background:#323232"></div>
  <div class="a" style="left:44px;top:21px;width:66px;height:15px;background:#1d1d1d"></div>
  <span class="t" style="left:12px;top:25px;font-size:9px;color:#e0e0e0">库资产</span>
  <span class="t" style="left:49.500px;top:25px;font-size:9px;color:#e0e0e0">打开文档资产</span>
  <!-- nav -->
  <div class="a" style="left:18px;top:48px;width:51px;height:17px;background:#222;border-radius:3px"></div>
  <svg style="left:27px;top:52px" width="8" height="9" viewBox="0 0 8 9"><path d="M7 .8 L1 4.500 L7 8.200 Z" fill="none" stroke="#555" stroke-width=".9"/></svg>
  <svg style="left:53px;top:52px" width="8" height="9" viewBox="0 0 8 9"><path d="M1 .8 L7 4.500 L1 8.200 Z" fill="none" stroke="#555" stroke-width=".9"/></svg>
  <span class="t" style="left:75.500px;top:52px;font-size:8px;color:#ddd">位置:</span>
  <div class="a" style="left:103px;top:49px;width:180px;height:13px;background:#1c1c1c;border-radius:2px"></div>
  <svg style="left:185px;top:51.500px" width="8" height="8" viewBox="0 0 8 8"><path d="M.5 .8 H3.600 V7 H.5 Z M4.400 .8 H7.500 V7 H4.400 Z" fill="#d8d8d8"/><path d="M.5 7.600 H7.500" stroke="#d8d8d8" stroke-width=".7"/></svg>
  <span class="t" style="left:195.500px;top:52px;font-size:8px;color:#ddd">库</span>
  <i class="arr" style="left:274px;top:54px"></i>
  <!-- name / search -->
  <div class="a" style="left:18px;top:71px;width:33px;height:13px;background:#222;border-radius:2px"></div>
  <span class="t" style="left:22px;top:74px;font-size:8px;color:#ddd">名称</span>
  <i class="arr" style="left:41px;top:76px"></i>
  <div class="a" style="left:57.500px;top:71.500px;width:226px;height:12px;background:#b9b9b9"></div>
  <div class="a" style="left:18px;top:91px;width:31px;height:13px;background:#1f1f1f;border-radius:2px"></div>
  <span class="t" style="left:24px;top:93px;font-size:10px;color:#e4e4e4">搜索</span>
  <!-- list -->
  <div class="a" style="left:7px;top:110px;width:289px;height:104px;background:#2b2b2b"></div>
  <div class="a" style="left:7px;top:110px;width:289px;height:15.500px;background:#1c1c1c"></div>
  <div class="a" style="left:233px;top:110px;width:1px;height:15px;background:#333"></div>
  <span class="t" style="left:11px;top:114px;font-size:8px;color:#e0e0e0">名称</span>
  <svg style="left:150px;top:116px" width="6" height="4" viewBox="0 0 6 4"><path d="M.5 3.500 L3 1 L5.500 3.500" fill="none" stroke="#777" stroke-width=".8"/></svg>
  <span class="t" style="left:162px;top:114px;font-size:8px;color:#e0e0e0">种类</span>
  <span class="t" style="left:237.500px;top:114px;font-size:8px;color:#e0e0e0">日期已修改</span>
  <div class="a" style="left:7.500px;top:125.500px;width:275px;height:16px;background:#60a89c;overflow:hidden">
    <svg style="left:7px;top:5px" width="6" height="6" viewBox="0 0 6 6"><path d="M.5 0 L5.500 3 L.5 6 Z" fill="#d4d4d4"/></svg>
    <div class="a" style="left:20px;top:3px;width:11px;height:10px;background:#d9d9d9;border-radius:1.500px"></div>
    <div class="a" style="left:22.500px;top:2px;width:6px;height:2px;background:#d9d9d9"></div>
    <div class="a" style="left:21.500px;top:5px;width:8px;height:7px;background:#e02b2b;border-radius:1px"></div>
    <span class="t" style="left:37px;top:4.500px;font-size:7.500px;color:#000">出厂内容库</span>
    <svg style="left:136px;top:2px" width="12" height="12" viewBox="0 0 10 10"><path d="M8.200 5.200 A3.300 3.300 0 1 1 6.700 2.300" fill="none" stroke="#111" stroke-width="1.100"/><path d="M5.600 .6 L8.300 2.400 L5.800 4.300 Z" fill="#111"/></svg>
    <span class="t" style="left:153.500px;top:4.500px;font-size:7.500px;color:#000">库文件夹</span>
    <span class="t" style="left:229.500px;top:4.500px;font-size:7.500px;color:#000">2021/2/9 04:31</span>
  </div>
  <!-- v scrollbar -->
  <div class="a" style="left:282.500px;top:125.500px;width:13px;height:77px;background:#1c1c1c"></div>
  <div class="a" style="left:283px;top:126px;width:12px;height:10px;background:#2f2f2f"></div>
  <svg style="left:286px;top:193.500px" width="6" height="5" viewBox="0 0 6 5"><path d="M0 .5 H6 L3 4.500 Z" fill="#b5b5b5"/></svg>
  <!-- h scrollbar -->
  <div class="a" style="left:7px;top:202.500px;width:276.500px;height:11.500px;background:#191919"></div>
  <div class="a" style="left:20px;top:203px;width:23px;height:11px;background:#333"></div>
  <svg style="left:11px;top:206px" width="5" height="5" viewBox="0 0 5 5"><path d="M4.500 0 V5 L.5 2.500 Z" fill="#b5b5b5"/></svg>
  <svg style="left:275px;top:206px" width="5" height="5" viewBox="0 0 5 5"><path d="M.5 0 V5 L4.500 2.500 Z" fill="#b5b5b5"/></svg>
  <div class="a" style="left:283.500px;top:202.500px;width:12px;height:11.500px;background:#2b2b2b"></div>
  <!-- slider row -->
  <div class="a" style="left:0;top:217px;width:302px;height:1px;background:#1d1d1d"></div>
  <span class="t" style="left:11.500px;top:223px;font-size:8px;color:#d8d8d8">缩略图大小:</span>
  <div class="a" style="left:67px;top:226px;width:217px;height:1.500px;background:#1c1c1c"></div>
  <div class="a" style="left:62px;top:221px;width:11px;height:11px;border-radius:6px;background:#191919"></div>
  <div class="a" style="left:0;top:238px;width:302px;height:1px;background:#1d1d1d"></div>
  <!-- preview -->
  <div class="a" style="left:1.500px;top:240.500px;width:290px;height:107.500px;background:#323232;border:1px solid #3d3d3d"></div>
  <div class="a" style="left:291.500px;top:240.500px;width:9.500px;height:107.500px;background:#1b1b1b"></div>
  <div class="a" style="left:291.500px;top:252px;width:9.500px;height:26px;background:#2d2d2d"></div>
  <svg style="left:293.500px;top:244.500px" width="6" height="5" viewBox="0 0 6 5"><path d="M0 4.500 H6 L3 .5 Z" fill="#b5b5b5"/></svg>
  <svg style="left:293.500px;top:340.500px" width="6" height="5" viewBox="0 0 6 5"><path d="M0 .5 H6 L3 4.500 Z" fill="#b5b5b5"/></svg>
  <!-- folder icon -->
  <svg style="left:10px;top:261px" width="96" height="74" viewBox="0 0 96 74"><rect x="3" y="14" width="90" height="57" rx="4" fill="none" stroke="#cbcbcb" stroke-width="5.500"/><path d="M6 13 L16 3 H36 L46 13" fill="none" stroke="#cbcbcb" stroke-width="5" stroke-linejoin="round"/><circle cx="47.500" cy="42" r="22" fill="#ee2b2b"/><path d="M30 34 C33 31.500 36 33 36.500 37 L38 47 C38.500 40 40 36 43.500 36 C47 36 47.500 40 47.500 47 C48 40 50 36 53.500 36 C57 36 58 40 58 44 C58 47 59.500 48 62 47" fill="none" stroke="#d9d0d0" stroke-width="3.600" stroke-linecap="round" stroke-linejoin="round"/><circle cx="65.500" cy="46.500" r="2" fill="#d9d0d0"/></svg>
  <span class="t" style="left:112px;top:254.500px;font-size:9px;color:#e6e6e6">出厂内容库</span>
  <span class="t" style="left:112px;top:276px;font-size:7.500px;color:#e0e0e0">种类:</span><span class="t" style="left:142px;top:276px;font-size:7.500px;color:#e0e0e0">库文件夹</span>
  <span class="t" style="left:112px;top:290px;font-size:7.500px;color:#e0e0e0">已创建:</span><span class="t" style="left:142px;top:290px;font-size:7.500px;color:#e0e0e0">2021/2/9 04:31</span>
  <span class="t" style="left:112px;top:304px;font-size:7.500px;color:#e0e0e0">已修改:</span><span class="t" style="left:142px;top:304px;font-size:7.500px;color:#e0e0e0">2021/2/9 04:31</span>
  <!-- bottom buttons -->
  <div class="a btn2" style="left:6.500px"></div><div class="a btn2" style="left:33.500px"></div><div class="a btn2" style="left:60.500px"></div><div class="a btn2" style="left:88px"></div>
  <svg style="left:10.500px;top:361.500px" width="12" height="12" viewBox="0 0 12 12"><path d="M6 0 V12 M0 6 H12" stroke="#8a8a8a" stroke-width="3"/></svg>
  <svg style="left:38.500px;top:361.500px" width="11" height="12" viewBox="0 0 11 12"><path d="M3.500 0 H7.500 V5.500 H11 L5.500 12 L0 5.500 H3.500 Z" fill="#727272"/></svg>
  <svg style="left:63.500px;top:360.500px" width="14" height="13" viewBox="0 0 14 13"><path d="M.8 12 V1.500 H5 L6.500 3.500 H13.200 V12 Z" fill="none" stroke="#6c6c6c" stroke-width="1.200"/><path d="M7 5.500 V10.500 M4.500 8 H9.500" stroke="#6c6c6c" stroke-width="1.200"/></svg>
  <svg style="left:94.500px;top:362.500px" width="7" height="9" viewBox="0 0 7 9"><path d="M0 1.800 H7 M2.300 1.500 V.4 H4.700 V1.500 M1 3 V8.500 H6 V3 M2.800 4.200 V7.300 M4.200 4.200 V7.300" fill="none" stroke="#555" stroke-width=".9"/></svg>
  <span class="t" style="left:114.500px;top:360px;font-size:8px;color:#d8d8d8">更多:</span>
  <div class="a" style="left:142.500px;top:358.500px;width:146px;height:11.500px;background:#1c1c1c;border-radius:2px"></div>
  <span class="t" style="left:202px;top:360.500px;font-size:8px;color:#7a7a7a">操作</span>
  <i class="arr" style="left:279.500px;top:362.500px"></i>
</div>
<!-- DLGCONTENT -->


<svg id="wm" style="left:0;top:0;pointer-events:none" width="1080" height="611" viewBox="0 0 1080 611">
<defs><g id="wmt" fill="#808080" stroke="#808080" stroke-width=".3" font-family="Liberation Sans, sans-serif">
<text transform="translate(-128.4 464.1) rotate(-38.6)" font-size="15.500" letter-spacing="1.700">公众号: 鹿鸣软件安装管家</text>
<text transform="translate(-149.0 574.2) rotate(-38.6)" font-size="17" letter-spacing="3.100">www.LuMingRJ.com</text>
<text transform="translate(-38.1 579.4) rotate(-38.6)" font-size="15.500" letter-spacing="1.700">公众号: 鹿鸣软件安装管家</text>
<text transform="translate(-58.7 689.5) rotate(-38.6)" font-size="17" letter-spacing="3.100">www.LuMingRJ.com</text>
<text transform="translate(52.2 694.7) rotate(-38.6)" font-size="15.500" letter-spacing="1.700">公众号: 鹿鸣软件安装管家</text>
<text transform="translate(-113.5 71.0) rotate(-38.6)" font-size="15.500" letter-spacing="1.700">公众号: 鹿鸣软件安装管家</text>
<text transform="translate(-134.1 181.1) rotate(-38.6)" font-size="17" letter-spacing="3.100">www.LuMingRJ.com</text>
<text transform="translate(-23.2 186.3) rotate(-38.6)" font-size="15.500" letter-spacing="1.700">公众号: 鹿鸣软件安装管家</text>
<text transform="translate(-43.8 296.4) rotate(-38.6)" font-size="17" letter-spacing="3.100">www.LuMingRJ.com</text>
<text transform="translate(67.1 301.6) rotate(-38.6)" font-size="15.500" letter-spacing="1.700">公众号: 鹿鸣软件安装管家</text>
<text transform="translate(46.5 411.7) rotate(-38.6)" font-size="17" letter-spacing="3.100">www.LuMingRJ.com</text>
<text transform="translate(157.4 416.9) rotate(-38.6)" font-size="15.500" letter-spacing="1.700">公众号: 鹿鸣软件安装管家</text>
<text transform="translate(136.8 527.0) rotate(-38.6)" font-size="17" letter-spacing="3.100">www.LuMingRJ.com</text>
<text transform="translate(247.7 532.2) rotate(-38.6)" font-size="15.500" letter-spacing="1.700">公众号: 鹿鸣软件安装管家</text>
<text transform="translate(227.1 642.3) rotate(-38.6)" font-size="17" letter-spacing="3.100">www.LuMingRJ.com</text>
<text transform="translate(338.0 647.5) rotate(-38.6)" font-size="15.500" letter-spacing="1.700">公众号: 鹿鸣软件安装管家</text>
<text transform="translate(61.4 18.6) rotate(-38.6)" font-size="17" letter-spacing="3.100">www.LuMingRJ.com</text>
<text transform="translate(172.3 23.8) rotate(-38.6)" font-size="15.500" letter-spacing="1.700">公众号: 鹿鸣软件安装管家</text>
<text transform="translate(151.7 133.9) rotate(-38.6)" font-size="17" letter-spacing="3.100">www.LuMingRJ.com</text>
<text transform="translate(262.6 139.1) rotate(-38.6)" font-size="15.500" letter-spacing="1.700">公众号: 鹿鸣软件安装管家</text>
<text transform="translate(242.0 249.2) rotate(-38.6)" font-size="17" letter-spacing="3.100">www.LuMingRJ.com</text>
<text transform="translate(352.9 254.4) rotate(-38.6)" font-size="15.500" letter-spacing="1.700">公众号: 鹿鸣软件安装管家</text>
<text transform="translate(332.3 364.5) rotate(-38.6)" font-size="17" letter-spacing="3.100">www.LuMingRJ.com</text>
<text transform="translate(443.2 369.7) rotate(-38.6)" font-size="15.500" letter-spacing="1.700">公众号: 鹿鸣软件安装管家</text>
<text transform="translate(422.6 479.8) rotate(-38.6)" font-size="17" letter-spacing="3.100">www.LuMingRJ.com</text>
<text transform="translate(533.5 485.0) rotate(-38.6)" font-size="15.500" letter-spacing="1.700">公众号: 鹿鸣软件安装管家</text>
<text transform="translate(512.9 595.1) rotate(-38.6)" font-size="17" letter-spacing="3.100">www.LuMingRJ.com</text>
<text transform="translate(623.8 600.3) rotate(-38.6)" font-size="15.500" letter-spacing="1.700">公众号: 鹿鸣软件安装管家</text>
<text transform="translate(603.2 710.4) rotate(-38.6)" font-size="17" letter-spacing="3.100">www.LuMingRJ.com</text>
<text transform="translate(714.1 715.6) rotate(-38.6)" font-size="15.500" letter-spacing="1.700">公众号: 鹿鸣软件安装管家</text>
<text transform="translate(437.5 86.7) rotate(-38.6)" font-size="17" letter-spacing="3.100">www.LuMingRJ.com</text>
<text transform="translate(548.4 91.9) rotate(-38.6)" font-size="15.500" letter-spacing="1.700">公众号: 鹿鸣软件安装管家</text>
<text transform="translate(527.8 202.0) rotate(-38.6)" font-size="17" letter-spacing="3.100">www.LuMingRJ.com</text>
<text transform="translate(638.7 207.2) rotate(-38.6)" font-size="15.500" letter-spacing="1.700">公众号: 鹿鸣软件安装管家</text>
<text transform="translate(618.1 317.3) rotate(-38.6)" font-size="17" letter-spacing="3.100">www.LuMingRJ.com</text>
<text transform="translate(729.0 322.5) rotate(-38.6)" font-size="15.500" letter-spacing="1.700">公众号: 鹿鸣软件安装管家</text>
<text transform="translate(708.4 432.6) rotate(-38.6)" font-size="17" letter-spacing="3.100">www.LuMingRJ.com</text>
<text transform="translate(819.3 437.8) rotate(-38.6)" font-size="15.500" letter-spacing="1.700">公众号: 鹿鸣软件安装管家</text>
<text transform="translate(798.7 547.9) rotate(-38.6)" font-size="17" letter-spacing="3.100">www.LuMingRJ.com</text>
<text transform="translate(909.6 553.1) rotate(-38.6)" font-size="15.500" letter-spacing="1.700">公众号: 鹿鸣软件安装管家</text>
<text transform="translate(889.0 663.2) rotate(-38.6)" font-size="17" letter-spacing="3.100">www.LuMingRJ.com</text>
<text transform="translate(999.9 668.4) rotate(-38.6)" font-size="15.500" letter-spacing="1.700">公众号: 鹿鸣软件安装管家</text>
<text transform="translate(723.3 39.5) rotate(-38.6)" font-size="17" letter-spacing="3.100">www.LuMingRJ.com</text>
<text transform="translate(834.2 44.7) rotate(-38.6)" font-size="15.500" letter-spacing="1.700">公众号: 鹿鸣软件安装管家</text>
<text transform="translate(813.6 154.8) rotate(-38.6)" font-size="17" letter-spacing="3.100">www.LuMingRJ.com</text>
<text transform="translate(924.5 160.0) rotate(-38.6)" font-size="15.500" letter-spacing="1.700">公众号: 鹿鸣软件安装管家</text>
<text transform="translate(903.9 270.1) rotate(-38.6)" font-size="17" letter-spacing="3.100">www.LuMingRJ.com</text>
<text transform="translate(1014.8 275.3) rotate(-38.6)" font-size="15.500" letter-spacing="1.700">公众号: 鹿鸣软件安装管家</text>
<text transform="translate(994.2 385.4) rotate(-38.6)" font-size="17" letter-spacing="3.100">www.LuMingRJ.com</text>
<text transform="translate(1084.5 500.7) rotate(-38.6)" font-size="17" letter-spacing="3.100">www.LuMingRJ.com</text>
<text transform="translate(1009.1 -7.7) rotate(-38.6)" font-size="17" letter-spacing="3.100">www.LuMingRJ.com</text>
</g>
<clipPath id="wmc1"><path clip-rule="evenodd" d="M73 61 H903 V406 H73 Z M94 79 V406 H396 V79 Z"/></clipPath>
<clipPath id="wmc2"><path clip-rule="evenodd" d="M0 0 H1080 V611 H0 Z M73 61 V406 H903 V61 Z"/></clipPath>
<clipPath id="wmc3"><path d="M94 79 H396 V406 H94 Z"/></clipPath>
</defs>
<use href="#wmt" clip-path="url(#wmc1)" opacity=".17"/>
<use href="#wmt" clip-path="url(#wmc2)" opacity=".1"/>
<use href="#wmt" clip-path="url(#wmc3)" opacity=".1"/>
</svg>
</body>
</html>
